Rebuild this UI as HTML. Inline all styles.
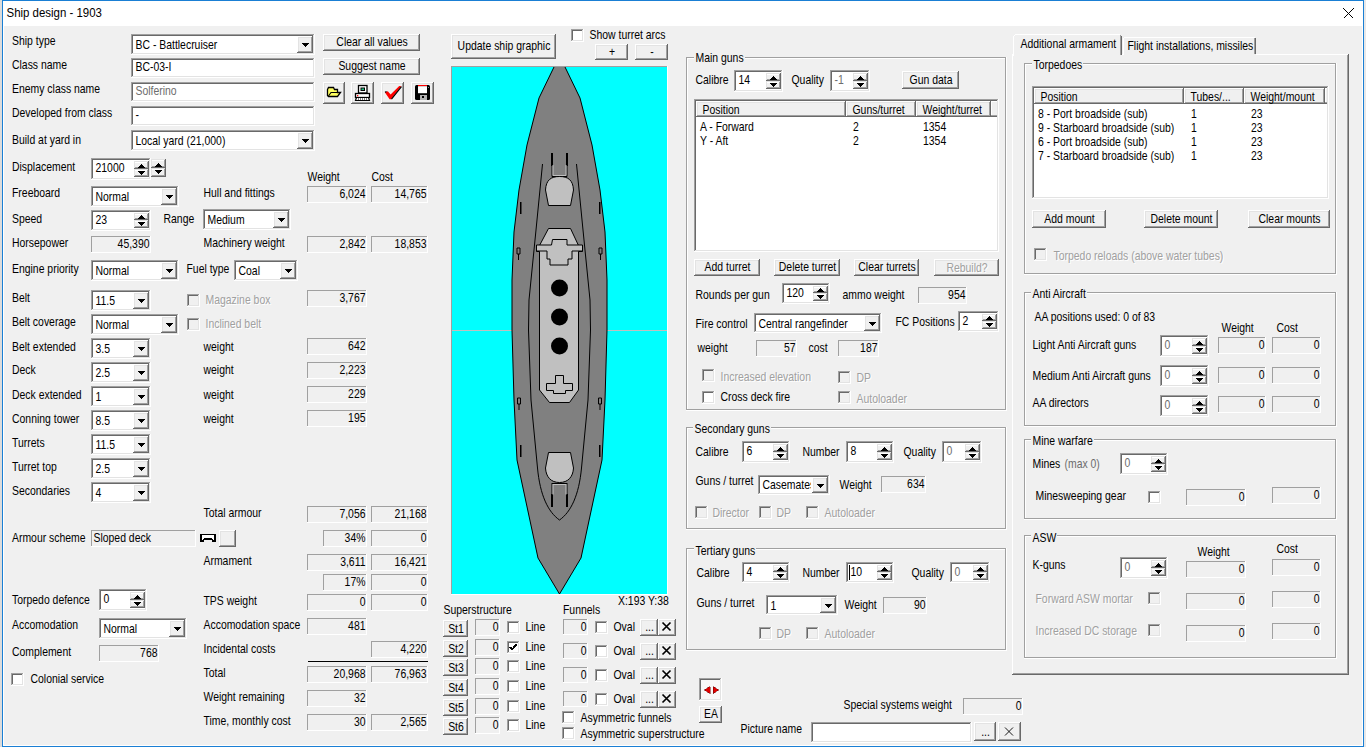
<!DOCTYPE html><html><head><meta charset="utf-8"><style>html,body{margin:0;padding:0;background:#f0f0f0;overflow:hidden}svg{display:block;font-family:"Liberation Sans",sans-serif}</style></head><body><svg width="1366" height="747" viewBox="0 0 1366 747" shape-rendering="crispEdges"><rect x="0" y="0" width="1366" height="747" fill="#dcdcdc"/><rect x="3" y="1" width="1360" height="745" fill="#ffffff"/><rect x="4" y="26" width="1358" height="719" fill="#f0f0f0"/><rect x="2" y="0" width="1362" height="1" fill="#1a7fd4"/><rect x="2" y="746" width="1362" height="1" fill="#1a7fd4"/><rect x="2" y="0" width="1" height="747" fill="#1a7fd4"/><rect x="1363" y="0" width="1" height="747" fill="#1a7fd4"/><rect x="1364" y="0" width="2" height="747" fill="#e8e8e8"/><text transform="translate(6.50,16.80) scale(0.955,1)" fill="#000" font-size="12">Ship design - 1903</text><path d="M1343.5,8.5 L1353.5,18.5 M1353.5,8.5 L1343.5,18.5" stroke="#000" stroke-width="1.1" fill="none"/><text transform="translate(12.00,45.30) scale(0.87,1)" fill="#000" font-size="12">Ship type</text><text transform="translate(12.00,68.80) scale(0.87,1)" fill="#000" font-size="12">Class name</text><text transform="translate(12.00,92.80) scale(0.87,1)" fill="#000" font-size="12">Enemy class name</text><text transform="translate(12.00,116.80) scale(0.87,1)" fill="#000" font-size="12">Developed from class</text><text transform="translate(12.00,143.80) scale(0.87,1)" fill="#000" font-size="12">Build at yard in</text><text transform="translate(12.00,170.80) scale(0.87,1)" fill="#000" font-size="12">Displacement</text><text transform="translate(12.00,196.80) scale(0.87,1)" fill="#000" font-size="12">Freeboard</text><text transform="translate(12.00,222.80) scale(0.87,1)" fill="#000" font-size="12">Speed</text><text transform="translate(12.00,246.80) scale(0.87,1)" fill="#000" font-size="12">Horsepower</text><text transform="translate(12.00,272.80) scale(0.87,1)" fill="#000" font-size="12">Engine priority</text><text transform="translate(12.00,301.80) scale(0.87,1)" fill="#000" font-size="12">Belt</text><text transform="translate(12.00,325.80) scale(0.87,1)" fill="#000" font-size="12">Belt coverage</text><text transform="translate(12.00,350.80) scale(0.87,1)" fill="#000" font-size="12">Belt extended</text><text transform="translate(12.00,373.80) scale(0.87,1)" fill="#000" font-size="12">Deck</text><text transform="translate(12.00,398.80) scale(0.87,1)" fill="#000" font-size="12">Deck extended</text><text transform="translate(12.00,422.80) scale(0.87,1)" fill="#000" font-size="12">Conning tower</text><text transform="translate(12.00,446.80) scale(0.87,1)" fill="#000" font-size="12">Turrets</text><text transform="translate(12.00,470.80) scale(0.87,1)" fill="#000" font-size="12">Turret top</text><text transform="translate(12.00,494.80) scale(0.87,1)" fill="#000" font-size="12">Secondaries</text><text transform="translate(12.00,542.30) scale(0.87,1)" fill="#000" font-size="12">Armour scheme</text><text transform="translate(12.00,603.80) scale(0.87,1)" fill="#000" font-size="12">Torpedo defence</text><text transform="translate(12.00,628.80) scale(0.87,1)" fill="#000" font-size="12">Accomodation</text><text transform="translate(12.00,655.80) scale(0.87,1)" fill="#000" font-size="12">Complement</text><rect x="131" y="34" width="184" height="21" fill="#ffffff"/><rect x="131" y="34" width="184" height="1" fill="#a0a0a0"/><rect x="131" y="34" width="1" height="21" fill="#a0a0a0"/><rect x="131" y="54" width="184" height="1" fill="#ffffff"/><rect x="314" y="34" width="1" height="21" fill="#ffffff"/><rect x="132" y="35" width="182" height="1" fill="#696969"/><rect x="132" y="35" width="1" height="19" fill="#696969"/><rect x="132" y="53" width="182" height="1" fill="#e3e3e3"/><rect x="313" y="35" width="1" height="19" fill="#e3e3e3"/><text transform="translate(135.50,49.30) scale(0.87,1)" fill="#000" font-size="12">BC - Battlecruiser</text><rect x="297" y="36" width="16" height="17" fill="#f0f0f0"/><rect x="297" y="36" width="16" height="1" fill="#ffffff"/><rect x="297" y="36" width="1" height="17" fill="#ffffff"/><rect x="297" y="52" width="16" height="1" fill="#696969"/><rect x="312" y="36" width="1" height="17" fill="#696969"/><rect x="298" y="37" width="14" height="1" fill="#e3e3e3"/><rect x="298" y="37" width="1" height="15" fill="#e3e3e3"/><rect x="298" y="51" width="14" height="1" fill="#a0a0a0"/><rect x="311" y="37" width="1" height="15" fill="#a0a0a0"/><rect x="302" y="43" width="7" height="1" fill="#000"/><rect x="303" y="44" width="5" height="1" fill="#000"/><rect x="304" y="45" width="3" height="1" fill="#000"/><rect x="305" y="46" width="1" height="1" fill="#000"/><rect x="131" y="58" width="184" height="20" fill="#ffffff"/><rect x="131" y="58" width="184" height="1" fill="#a0a0a0"/><rect x="131" y="58" width="1" height="20" fill="#a0a0a0"/><rect x="131" y="77" width="184" height="1" fill="#ffffff"/><rect x="314" y="58" width="1" height="20" fill="#ffffff"/><rect x="132" y="59" width="182" height="1" fill="#696969"/><rect x="132" y="59" width="1" height="18" fill="#696969"/><rect x="132" y="76" width="182" height="1" fill="#e3e3e3"/><rect x="313" y="59" width="1" height="18" fill="#e3e3e3"/><text transform="translate(135.50,71.30) scale(0.87,1)" fill="#000" font-size="12">BC-03-I</text><rect x="131" y="82" width="184" height="20" fill="#ffffff"/><rect x="131" y="82" width="184" height="1" fill="#a0a0a0"/><rect x="131" y="82" width="1" height="20" fill="#a0a0a0"/><rect x="131" y="101" width="184" height="1" fill="#ffffff"/><rect x="314" y="82" width="1" height="20" fill="#ffffff"/><rect x="132" y="83" width="182" height="1" fill="#696969"/><rect x="132" y="83" width="1" height="18" fill="#696969"/><rect x="132" y="100" width="182" height="1" fill="#e3e3e3"/><rect x="313" y="83" width="1" height="18" fill="#e3e3e3"/><text transform="translate(135.50,95.30) scale(0.87,1)" fill="#6d6d6d" font-size="12">Solferino</text><rect x="131" y="106" width="184" height="20" fill="#ffffff"/><rect x="131" y="106" width="184" height="1" fill="#a0a0a0"/><rect x="131" y="106" width="1" height="20" fill="#a0a0a0"/><rect x="131" y="125" width="184" height="1" fill="#ffffff"/><rect x="314" y="106" width="1" height="20" fill="#ffffff"/><rect x="132" y="107" width="182" height="1" fill="#696969"/><rect x="132" y="107" width="1" height="18" fill="#696969"/><rect x="132" y="124" width="182" height="1" fill="#e3e3e3"/><rect x="313" y="107" width="1" height="18" fill="#e3e3e3"/><text transform="translate(135.50,119.30) scale(0.87,1)" fill="#000" font-size="12">-</text><rect x="131" y="130" width="184" height="21" fill="#ffffff"/><rect x="131" y="130" width="184" height="1" fill="#a0a0a0"/><rect x="131" y="130" width="1" height="21" fill="#a0a0a0"/><rect x="131" y="150" width="184" height="1" fill="#ffffff"/><rect x="314" y="130" width="1" height="21" fill="#ffffff"/><rect x="132" y="131" width="182" height="1" fill="#696969"/><rect x="132" y="131" width="1" height="19" fill="#696969"/><rect x="132" y="149" width="182" height="1" fill="#e3e3e3"/><rect x="313" y="131" width="1" height="19" fill="#e3e3e3"/><text transform="translate(135.50,145.30) scale(0.87,1)" fill="#000" font-size="12">Local yard (21,000)</text><rect x="297" y="132" width="16" height="17" fill="#f0f0f0"/><rect x="297" y="132" width="16" height="1" fill="#ffffff"/><rect x="297" y="132" width="1" height="17" fill="#ffffff"/><rect x="297" y="148" width="16" height="1" fill="#696969"/><rect x="312" y="132" width="1" height="17" fill="#696969"/><rect x="298" y="133" width="14" height="1" fill="#e3e3e3"/><rect x="298" y="133" width="1" height="15" fill="#e3e3e3"/><rect x="298" y="147" width="14" height="1" fill="#a0a0a0"/><rect x="311" y="133" width="1" height="15" fill="#a0a0a0"/><rect x="302" y="139" width="7" height="1" fill="#000"/><rect x="303" y="140" width="5" height="1" fill="#000"/><rect x="304" y="141" width="3" height="1" fill="#000"/><rect x="305" y="142" width="1" height="1" fill="#000"/><rect x="323" y="34" width="97" height="17" fill="#f0f0f0"/><rect x="323" y="34" width="97" height="1" fill="#ffffff"/><rect x="323" y="34" width="1" height="17" fill="#ffffff"/><rect x="323" y="50" width="97" height="1" fill="#696969"/><rect x="419" y="34" width="1" height="17" fill="#696969"/><rect x="324" y="35" width="95" height="1" fill="#e3e3e3"/><rect x="324" y="35" width="1" height="15" fill="#e3e3e3"/><rect x="324" y="49" width="95" height="1" fill="#a0a0a0"/><rect x="418" y="35" width="1" height="15" fill="#a0a0a0"/><text transform="translate(372.00,46.30) scale(0.87,1)" fill="#000" font-size="12" text-anchor="middle">Clear all values</text><rect x="323" y="58" width="97" height="17" fill="#f0f0f0"/><rect x="323" y="58" width="97" height="1" fill="#ffffff"/><rect x="323" y="58" width="1" height="17" fill="#ffffff"/><rect x="323" y="74" width="97" height="1" fill="#696969"/><rect x="419" y="58" width="1" height="17" fill="#696969"/><rect x="324" y="59" width="95" height="1" fill="#e3e3e3"/><rect x="324" y="59" width="1" height="15" fill="#e3e3e3"/><rect x="324" y="73" width="95" height="1" fill="#a0a0a0"/><rect x="418" y="59" width="1" height="15" fill="#a0a0a0"/><text transform="translate(372.00,70.30) scale(0.87,1)" fill="#000" font-size="12" text-anchor="middle">Suggest name</text><rect x="323" y="82" width="22" height="22" fill="#f0f0f0"/><rect x="323" y="82" width="22" height="1" fill="#ffffff"/><rect x="323" y="82" width="1" height="22" fill="#ffffff"/><rect x="323" y="103" width="22" height="1" fill="#696969"/><rect x="344" y="82" width="1" height="22" fill="#696969"/><rect x="324" y="83" width="20" height="1" fill="#e3e3e3"/><rect x="324" y="83" width="1" height="20" fill="#e3e3e3"/><rect x="324" y="102" width="20" height="1" fill="#a0a0a0"/><rect x="343" y="83" width="1" height="20" fill="#a0a0a0"/><rect x="351" y="82" width="23" height="22" fill="#f0f0f0"/><rect x="351" y="82" width="23" height="1" fill="#ffffff"/><rect x="351" y="82" width="1" height="22" fill="#ffffff"/><rect x="351" y="103" width="23" height="1" fill="#696969"/><rect x="373" y="82" width="1" height="22" fill="#696969"/><rect x="352" y="83" width="21" height="1" fill="#e3e3e3"/><rect x="352" y="83" width="1" height="20" fill="#e3e3e3"/><rect x="352" y="102" width="21" height="1" fill="#a0a0a0"/><rect x="372" y="83" width="1" height="20" fill="#a0a0a0"/><rect x="381" y="82" width="23" height="22" fill="#f0f0f0"/><rect x="381" y="82" width="23" height="1" fill="#ffffff"/><rect x="381" y="82" width="1" height="22" fill="#ffffff"/><rect x="381" y="103" width="23" height="1" fill="#696969"/><rect x="403" y="82" width="1" height="22" fill="#696969"/><rect x="382" y="83" width="21" height="1" fill="#e3e3e3"/><rect x="382" y="83" width="1" height="20" fill="#e3e3e3"/><rect x="382" y="102" width="21" height="1" fill="#a0a0a0"/><rect x="402" y="83" width="1" height="20" fill="#a0a0a0"/><rect x="411" y="82" width="23" height="22" fill="#f0f0f0"/><rect x="411" y="82" width="23" height="1" fill="#ffffff"/><rect x="411" y="82" width="1" height="22" fill="#ffffff"/><rect x="411" y="103" width="23" height="1" fill="#696969"/><rect x="433" y="82" width="1" height="22" fill="#696969"/><rect x="412" y="83" width="21" height="1" fill="#e3e3e3"/><rect x="412" y="83" width="1" height="20" fill="#e3e3e3"/><rect x="412" y="102" width="21" height="1" fill="#a0a0a0"/><rect x="432" y="83" width="1" height="20" fill="#a0a0a0"/><g shape-rendering="auto"><path d="M327.5,89.5 L328.5,87.5 L333.5,87.5 L334.5,89.5 L337.5,89.5 L337.5,92.5 L340.5,92.5 L337.5,96.5 L328.5,96.5 L327.5,95.5 Z" fill="#ffff60" stroke="#000" stroke-width="1.3"/><path d="M328.5,96 L331,92.5 L340.5,92.5" fill="none" stroke="#000" stroke-width="1.1"/><rect x="358.5" y="85.5" width="8.5" height="7.5" fill="#fff" stroke="#000" stroke-width="1.3"/><rect x="360.5" y="87.5" width="4.5" height="3.5" fill="#000"/><rect x="361.5" y="88.5" width="2.5" height="1.5" fill="#20c080"/><rect x="355.5" y="93.5" width="14" height="4" fill="#fff" stroke="#000" stroke-width="1.3"/><rect x="357" y="95" width="1.3" height="1.3" fill="#f00"/><path d="M356.5,97.5 L368.5,97.5 L369.5,100.5 L355.5,100.5 Z" fill="#fff" stroke="#000" stroke-width="1.2"/><path d="M358,99 h1 M360,99 h1 M362,99 h1 M364,99 h1 M366,99 h1" stroke="#000" stroke-width="1"/><path d="M384.8,92.2 L387.8,91.2 L390.6,94.6 L399.2,86 L401.3,86.2 L391.2,99.2 L389.6,99.2 Z" fill="#ff0000"/><path d="M401.5,86.6 L391.5,99.2 M385,92.2 L386.5,91.5" stroke="#000" stroke-width="1.1" fill="none"/><rect x="415" y="85" width="15" height="15" rx="1.5" fill="#000"/><rect x="418" y="85" width="9" height="1.2" fill="#f00"/><rect x="418" y="86.2" width="9" height="7" fill="#fff"/><rect x="420" y="95" width="7" height="5" fill="#b0b0b0"/><rect x="422" y="96" width="2" height="2" fill="#000"/><rect x="428" y="87" width="1" height="1" fill="#888"/></g><rect x="91" y="158" width="60" height="22" fill="#ffffff"/><rect x="91" y="158" width="60" height="1" fill="#a0a0a0"/><rect x="91" y="158" width="1" height="22" fill="#a0a0a0"/><rect x="91" y="179" width="60" height="1" fill="#ffffff"/><rect x="150" y="158" width="1" height="22" fill="#ffffff"/><rect x="92" y="159" width="58" height="1" fill="#696969"/><rect x="92" y="159" width="1" height="20" fill="#696969"/><rect x="92" y="178" width="58" height="1" fill="#e3e3e3"/><rect x="149" y="159" width="1" height="20" fill="#e3e3e3"/><text transform="translate(95.50,172.30) scale(0.87,1)" fill="#000" font-size="12">21000</text><rect x="134" y="161" width="15" height="8" fill="#f0f0f0"/><rect x="134" y="161" width="15" height="1" fill="#e3e3e3"/><rect x="134" y="161" width="1" height="8" fill="#e3e3e3"/><rect x="134" y="168" width="15" height="1" fill="#696969"/><rect x="148" y="161" width="1" height="8" fill="#696969"/><rect x="135" y="162" width="13" height="1" fill="#ffffff"/><rect x="135" y="167" width="13" height="1" fill="#a0a0a0"/><rect x="147" y="162" width="1" height="6" fill="#a0a0a0"/><rect x="141" y="164" width="1" height="1" fill="#000"/><rect x="140" y="165" width="3" height="1" fill="#000"/><rect x="139" y="166" width="5" height="1" fill="#000"/><rect x="138" y="167" width="7" height="1" fill="#000"/><rect x="134" y="169" width="15" height="8" fill="#f0f0f0"/><rect x="134" y="169" width="15" height="1" fill="#e3e3e3"/><rect x="134" y="169" width="1" height="8" fill="#e3e3e3"/><rect x="134" y="176" width="15" height="1" fill="#696969"/><rect x="148" y="169" width="1" height="8" fill="#696969"/><rect x="135" y="170" width="13" height="1" fill="#ffffff"/><rect x="135" y="175" width="13" height="1" fill="#a0a0a0"/><rect x="147" y="170" width="1" height="6" fill="#a0a0a0"/><rect x="138" y="171" width="7" height="1" fill="#000"/><rect x="139" y="172" width="5" height="1" fill="#000"/><rect x="140" y="173" width="3" height="1" fill="#000"/><rect x="141" y="174" width="1" height="1" fill="#000"/><rect x="151" y="159" width="15" height="9" fill="#f0f0f0"/><rect x="151" y="159" width="15" height="1" fill="#e3e3e3"/><rect x="151" y="159" width="1" height="9" fill="#e3e3e3"/><rect x="151" y="167" width="15" height="1" fill="#696969"/><rect x="165" y="159" width="1" height="9" fill="#696969"/><rect x="152" y="160" width="13" height="1" fill="#ffffff"/><rect x="152" y="166" width="13" height="1" fill="#a0a0a0"/><rect x="164" y="160" width="1" height="7" fill="#a0a0a0"/><rect x="158" y="163" width="1" height="1" fill="#000"/><rect x="157" y="164" width="3" height="1" fill="#000"/><rect x="156" y="165" width="5" height="1" fill="#000"/><rect x="155" y="166" width="7" height="1" fill="#000"/><rect x="151" y="168" width="15" height="9" fill="#f0f0f0"/><rect x="151" y="168" width="15" height="1" fill="#e3e3e3"/><rect x="151" y="168" width="1" height="9" fill="#e3e3e3"/><rect x="151" y="176" width="15" height="1" fill="#696969"/><rect x="165" y="168" width="1" height="9" fill="#696969"/><rect x="152" y="169" width="13" height="1" fill="#ffffff"/><rect x="152" y="175" width="13" height="1" fill="#a0a0a0"/><rect x="164" y="169" width="1" height="7" fill="#a0a0a0"/><rect x="155" y="170" width="7" height="1" fill="#000"/><rect x="156" y="171" width="5" height="1" fill="#000"/><rect x="157" y="172" width="3" height="1" fill="#000"/><rect x="158" y="173" width="1" height="1" fill="#000"/><rect x="91" y="186" width="88" height="21" fill="#ffffff"/><rect x="91" y="186" width="88" height="1" fill="#a0a0a0"/><rect x="91" y="186" width="1" height="21" fill="#a0a0a0"/><rect x="91" y="206" width="88" height="1" fill="#ffffff"/><rect x="178" y="186" width="1" height="21" fill="#ffffff"/><rect x="92" y="187" width="86" height="1" fill="#696969"/><rect x="92" y="187" width="1" height="19" fill="#696969"/><rect x="92" y="205" width="86" height="1" fill="#e3e3e3"/><rect x="177" y="187" width="1" height="19" fill="#e3e3e3"/><text transform="translate(95.50,201.30) scale(0.87,1)" fill="#000" font-size="12">Normal</text><rect x="161" y="188" width="16" height="17" fill="#f0f0f0"/><rect x="161" y="188" width="16" height="1" fill="#ffffff"/><rect x="161" y="188" width="1" height="17" fill="#ffffff"/><rect x="161" y="204" width="16" height="1" fill="#696969"/><rect x="176" y="188" width="1" height="17" fill="#696969"/><rect x="162" y="189" width="14" height="1" fill="#e3e3e3"/><rect x="162" y="189" width="1" height="15" fill="#e3e3e3"/><rect x="162" y="203" width="14" height="1" fill="#a0a0a0"/><rect x="175" y="189" width="1" height="15" fill="#a0a0a0"/><rect x="166" y="195" width="7" height="1" fill="#000"/><rect x="167" y="196" width="5" height="1" fill="#000"/><rect x="168" y="197" width="3" height="1" fill="#000"/><rect x="169" y="198" width="1" height="1" fill="#000"/><rect x="91" y="210" width="60" height="21" fill="#ffffff"/><rect x="91" y="210" width="60" height="1" fill="#a0a0a0"/><rect x="91" y="210" width="1" height="21" fill="#a0a0a0"/><rect x="91" y="230" width="60" height="1" fill="#ffffff"/><rect x="150" y="210" width="1" height="21" fill="#ffffff"/><rect x="92" y="211" width="58" height="1" fill="#696969"/><rect x="92" y="211" width="1" height="19" fill="#696969"/><rect x="92" y="229" width="58" height="1" fill="#e3e3e3"/><rect x="149" y="211" width="1" height="19" fill="#e3e3e3"/><text transform="translate(95.50,223.80) scale(0.87,1)" fill="#000" font-size="12">23</text><rect x="134" y="213" width="15" height="7" fill="#f0f0f0"/><rect x="134" y="213" width="15" height="1" fill="#e3e3e3"/><rect x="134" y="213" width="1" height="7" fill="#e3e3e3"/><rect x="134" y="219" width="15" height="1" fill="#696969"/><rect x="148" y="213" width="1" height="7" fill="#696969"/><rect x="135" y="214" width="13" height="1" fill="#ffffff"/><rect x="135" y="218" width="13" height="1" fill="#a0a0a0"/><rect x="147" y="214" width="1" height="5" fill="#a0a0a0"/><rect x="141" y="215" width="1" height="1" fill="#000"/><rect x="140" y="216" width="3" height="1" fill="#000"/><rect x="139" y="217" width="5" height="1" fill="#000"/><rect x="138" y="218" width="7" height="1" fill="#000"/><rect x="134" y="220" width="15" height="8" fill="#f0f0f0"/><rect x="134" y="220" width="15" height="1" fill="#e3e3e3"/><rect x="134" y="220" width="1" height="8" fill="#e3e3e3"/><rect x="134" y="227" width="15" height="1" fill="#696969"/><rect x="148" y="220" width="1" height="8" fill="#696969"/><rect x="135" y="221" width="13" height="1" fill="#ffffff"/><rect x="135" y="226" width="13" height="1" fill="#a0a0a0"/><rect x="147" y="221" width="1" height="6" fill="#a0a0a0"/><rect x="138" y="222" width="7" height="1" fill="#000"/><rect x="139" y="223" width="5" height="1" fill="#000"/><rect x="140" y="224" width="3" height="1" fill="#000"/><rect x="141" y="225" width="1" height="1" fill="#000"/><text transform="translate(163.50,222.80) scale(0.87,1)" fill="#000" font-size="12">Range</text><rect x="203" y="209" width="88" height="21" fill="#ffffff"/><rect x="203" y="209" width="88" height="1" fill="#a0a0a0"/><rect x="203" y="209" width="1" height="21" fill="#a0a0a0"/><rect x="203" y="229" width="88" height="1" fill="#ffffff"/><rect x="290" y="209" width="1" height="21" fill="#ffffff"/><rect x="204" y="210" width="86" height="1" fill="#696969"/><rect x="204" y="210" width="1" height="19" fill="#696969"/><rect x="204" y="228" width="86" height="1" fill="#e3e3e3"/><rect x="289" y="210" width="1" height="19" fill="#e3e3e3"/><text transform="translate(207.50,224.30) scale(0.87,1)" fill="#000" font-size="12">Medium</text><rect x="273" y="211" width="16" height="17" fill="#f0f0f0"/><rect x="273" y="211" width="16" height="1" fill="#ffffff"/><rect x="273" y="211" width="1" height="17" fill="#ffffff"/><rect x="273" y="227" width="16" height="1" fill="#696969"/><rect x="288" y="211" width="1" height="17" fill="#696969"/><rect x="274" y="212" width="14" height="1" fill="#e3e3e3"/><rect x="274" y="212" width="1" height="15" fill="#e3e3e3"/><rect x="274" y="226" width="14" height="1" fill="#a0a0a0"/><rect x="287" y="212" width="1" height="15" fill="#a0a0a0"/><rect x="278" y="218" width="7" height="1" fill="#000"/><rect x="279" y="219" width="5" height="1" fill="#000"/><rect x="280" y="220" width="3" height="1" fill="#000"/><rect x="281" y="221" width="1" height="1" fill="#000"/><rect x="91" y="236" width="60" height="17" fill="#f0f0f0"/><rect x="91" y="236" width="60" height="1" fill="#a0a0a0"/><rect x="91" y="236" width="1" height="17" fill="#a0a0a0"/><rect x="91" y="252" width="60" height="1" fill="#ffffff"/><rect x="150" y="236" width="1" height="17" fill="#ffffff"/><text transform="translate(149.50,248.30) scale(0.87,1)" fill="#000" font-size="12" text-anchor="end">45,390</text><rect x="91" y="260" width="88" height="21" fill="#ffffff"/><rect x="91" y="260" width="88" height="1" fill="#a0a0a0"/><rect x="91" y="260" width="1" height="21" fill="#a0a0a0"/><rect x="91" y="280" width="88" height="1" fill="#ffffff"/><rect x="178" y="260" width="1" height="21" fill="#ffffff"/><rect x="92" y="261" width="86" height="1" fill="#696969"/><rect x="92" y="261" width="1" height="19" fill="#696969"/><rect x="92" y="279" width="86" height="1" fill="#e3e3e3"/><rect x="177" y="261" width="1" height="19" fill="#e3e3e3"/><text transform="translate(95.50,275.30) scale(0.87,1)" fill="#000" font-size="12">Normal</text><rect x="161" y="262" width="16" height="17" fill="#f0f0f0"/><rect x="161" y="262" width="16" height="1" fill="#ffffff"/><rect x="161" y="262" width="1" height="17" fill="#ffffff"/><rect x="161" y="278" width="16" height="1" fill="#696969"/><rect x="176" y="262" width="1" height="17" fill="#696969"/><rect x="162" y="263" width="14" height="1" fill="#e3e3e3"/><rect x="162" y="263" width="1" height="15" fill="#e3e3e3"/><rect x="162" y="277" width="14" height="1" fill="#a0a0a0"/><rect x="175" y="263" width="1" height="15" fill="#a0a0a0"/><rect x="166" y="269" width="7" height="1" fill="#000"/><rect x="167" y="270" width="5" height="1" fill="#000"/><rect x="168" y="271" width="3" height="1" fill="#000"/><rect x="169" y="272" width="1" height="1" fill="#000"/><text transform="translate(186.50,272.80) scale(0.87,1)" fill="#000" font-size="12">Fuel type</text><rect x="234" y="260" width="64" height="21" fill="#ffffff"/><rect x="234" y="260" width="64" height="1" fill="#a0a0a0"/><rect x="234" y="260" width="1" height="21" fill="#a0a0a0"/><rect x="234" y="280" width="64" height="1" fill="#ffffff"/><rect x="297" y="260" width="1" height="21" fill="#ffffff"/><rect x="235" y="261" width="62" height="1" fill="#696969"/><rect x="235" y="261" width="1" height="19" fill="#696969"/><rect x="235" y="279" width="62" height="1" fill="#e3e3e3"/><rect x="296" y="261" width="1" height="19" fill="#e3e3e3"/><text transform="translate(238.50,275.30) scale(0.87,1)" fill="#000" font-size="12">Coal</text><rect x="280" y="262" width="16" height="17" fill="#f0f0f0"/><rect x="280" y="262" width="16" height="1" fill="#ffffff"/><rect x="280" y="262" width="1" height="17" fill="#ffffff"/><rect x="280" y="278" width="16" height="1" fill="#696969"/><rect x="295" y="262" width="1" height="17" fill="#696969"/><rect x="281" y="263" width="14" height="1" fill="#e3e3e3"/><rect x="281" y="263" width="1" height="15" fill="#e3e3e3"/><rect x="281" y="277" width="14" height="1" fill="#a0a0a0"/><rect x="294" y="263" width="1" height="15" fill="#a0a0a0"/><rect x="285" y="269" width="7" height="1" fill="#000"/><rect x="286" y="270" width="5" height="1" fill="#000"/><rect x="287" y="271" width="3" height="1" fill="#000"/><rect x="288" y="272" width="1" height="1" fill="#000"/><rect x="91" y="290" width="60" height="21" fill="#ffffff"/><rect x="91" y="290" width="60" height="1" fill="#a0a0a0"/><rect x="91" y="290" width="1" height="21" fill="#a0a0a0"/><rect x="91" y="310" width="60" height="1" fill="#ffffff"/><rect x="150" y="290" width="1" height="21" fill="#ffffff"/><rect x="92" y="291" width="58" height="1" fill="#696969"/><rect x="92" y="291" width="1" height="19" fill="#696969"/><rect x="92" y="309" width="58" height="1" fill="#e3e3e3"/><rect x="149" y="291" width="1" height="19" fill="#e3e3e3"/><text transform="translate(95.50,305.30) scale(0.87,1)" fill="#000" font-size="12">11.5</text><rect x="133" y="292" width="16" height="17" fill="#f0f0f0"/><rect x="133" y="292" width="16" height="1" fill="#ffffff"/><rect x="133" y="292" width="1" height="17" fill="#ffffff"/><rect x="133" y="308" width="16" height="1" fill="#696969"/><rect x="148" y="292" width="1" height="17" fill="#696969"/><rect x="134" y="293" width="14" height="1" fill="#e3e3e3"/><rect x="134" y="293" width="1" height="15" fill="#e3e3e3"/><rect x="134" y="307" width="14" height="1" fill="#a0a0a0"/><rect x="147" y="293" width="1" height="15" fill="#a0a0a0"/><rect x="138" y="299" width="7" height="1" fill="#000"/><rect x="139" y="300" width="5" height="1" fill="#000"/><rect x="140" y="301" width="3" height="1" fill="#000"/><rect x="141" y="302" width="1" height="1" fill="#000"/><rect x="187" y="294" width="13" height="13" fill="#f0f0f0"/><rect x="187" y="294" width="13" height="1" fill="#a0a0a0"/><rect x="187" y="294" width="1" height="13" fill="#a0a0a0"/><rect x="187" y="306" width="13" height="1" fill="#ffffff"/><rect x="199" y="294" width="1" height="13" fill="#ffffff"/><rect x="188" y="295" width="11" height="1" fill="#696969"/><rect x="188" y="295" width="1" height="11" fill="#696969"/><rect x="188" y="305" width="11" height="1" fill="#e3e3e3"/><rect x="198" y="295" width="1" height="11" fill="#e3e3e3"/><text transform="translate(206.50,304.80) scale(0.87,1)" fill="#ffffff" font-size="12">Magazine box</text><text transform="translate(205.50,303.80) scale(0.87,1)" fill="#a0a0a0" font-size="12">Magazine box</text><rect x="91" y="314" width="88" height="21" fill="#ffffff"/><rect x="91" y="314" width="88" height="1" fill="#a0a0a0"/><rect x="91" y="314" width="1" height="21" fill="#a0a0a0"/><rect x="91" y="334" width="88" height="1" fill="#ffffff"/><rect x="178" y="314" width="1" height="21" fill="#ffffff"/><rect x="92" y="315" width="86" height="1" fill="#696969"/><rect x="92" y="315" width="1" height="19" fill="#696969"/><rect x="92" y="333" width="86" height="1" fill="#e3e3e3"/><rect x="177" y="315" width="1" height="19" fill="#e3e3e3"/><text transform="translate(95.50,329.30) scale(0.87,1)" fill="#000" font-size="12">Normal</text><rect x="161" y="316" width="16" height="17" fill="#f0f0f0"/><rect x="161" y="316" width="16" height="1" fill="#ffffff"/><rect x="161" y="316" width="1" height="17" fill="#ffffff"/><rect x="161" y="332" width="16" height="1" fill="#696969"/><rect x="176" y="316" width="1" height="17" fill="#696969"/><rect x="162" y="317" width="14" height="1" fill="#e3e3e3"/><rect x="162" y="317" width="1" height="15" fill="#e3e3e3"/><rect x="162" y="331" width="14" height="1" fill="#a0a0a0"/><rect x="175" y="317" width="1" height="15" fill="#a0a0a0"/><rect x="166" y="323" width="7" height="1" fill="#000"/><rect x="167" y="324" width="5" height="1" fill="#000"/><rect x="168" y="325" width="3" height="1" fill="#000"/><rect x="169" y="326" width="1" height="1" fill="#000"/><rect x="187" y="318" width="13" height="13" fill="#f0f0f0"/><rect x="187" y="318" width="13" height="1" fill="#a0a0a0"/><rect x="187" y="318" width="1" height="13" fill="#a0a0a0"/><rect x="187" y="330" width="13" height="1" fill="#ffffff"/><rect x="199" y="318" width="1" height="13" fill="#ffffff"/><rect x="188" y="319" width="11" height="1" fill="#696969"/><rect x="188" y="319" width="1" height="11" fill="#696969"/><rect x="188" y="329" width="11" height="1" fill="#e3e3e3"/><rect x="198" y="319" width="1" height="11" fill="#e3e3e3"/><text transform="translate(206.50,328.80) scale(0.87,1)" fill="#ffffff" font-size="12">Inclined belt</text><text transform="translate(205.50,327.80) scale(0.87,1)" fill="#a0a0a0" font-size="12">Inclined belt</text><rect x="91" y="338" width="60" height="21" fill="#ffffff"/><rect x="91" y="338" width="60" height="1" fill="#a0a0a0"/><rect x="91" y="338" width="1" height="21" fill="#a0a0a0"/><rect x="91" y="358" width="60" height="1" fill="#ffffff"/><rect x="150" y="338" width="1" height="21" fill="#ffffff"/><rect x="92" y="339" width="58" height="1" fill="#696969"/><rect x="92" y="339" width="1" height="19" fill="#696969"/><rect x="92" y="357" width="58" height="1" fill="#e3e3e3"/><rect x="149" y="339" width="1" height="19" fill="#e3e3e3"/><text transform="translate(95.50,353.30) scale(0.87,1)" fill="#000" font-size="12">3.5</text><rect x="133" y="340" width="16" height="17" fill="#f0f0f0"/><rect x="133" y="340" width="16" height="1" fill="#ffffff"/><rect x="133" y="340" width="1" height="17" fill="#ffffff"/><rect x="133" y="356" width="16" height="1" fill="#696969"/><rect x="148" y="340" width="1" height="17" fill="#696969"/><rect x="134" y="341" width="14" height="1" fill="#e3e3e3"/><rect x="134" y="341" width="1" height="15" fill="#e3e3e3"/><rect x="134" y="355" width="14" height="1" fill="#a0a0a0"/><rect x="147" y="341" width="1" height="15" fill="#a0a0a0"/><rect x="138" y="347" width="7" height="1" fill="#000"/><rect x="139" y="348" width="5" height="1" fill="#000"/><rect x="140" y="349" width="3" height="1" fill="#000"/><rect x="141" y="350" width="1" height="1" fill="#000"/><rect x="91" y="362" width="60" height="21" fill="#ffffff"/><rect x="91" y="362" width="60" height="1" fill="#a0a0a0"/><rect x="91" y="362" width="1" height="21" fill="#a0a0a0"/><rect x="91" y="382" width="60" height="1" fill="#ffffff"/><rect x="150" y="362" width="1" height="21" fill="#ffffff"/><rect x="92" y="363" width="58" height="1" fill="#696969"/><rect x="92" y="363" width="1" height="19" fill="#696969"/><rect x="92" y="381" width="58" height="1" fill="#e3e3e3"/><rect x="149" y="363" width="1" height="19" fill="#e3e3e3"/><text transform="translate(95.50,377.30) scale(0.87,1)" fill="#000" font-size="12">2.5</text><rect x="133" y="364" width="16" height="17" fill="#f0f0f0"/><rect x="133" y="364" width="16" height="1" fill="#ffffff"/><rect x="133" y="364" width="1" height="17" fill="#ffffff"/><rect x="133" y="380" width="16" height="1" fill="#696969"/><rect x="148" y="364" width="1" height="17" fill="#696969"/><rect x="134" y="365" width="14" height="1" fill="#e3e3e3"/><rect x="134" y="365" width="1" height="15" fill="#e3e3e3"/><rect x="134" y="379" width="14" height="1" fill="#a0a0a0"/><rect x="147" y="365" width="1" height="15" fill="#a0a0a0"/><rect x="138" y="371" width="7" height="1" fill="#000"/><rect x="139" y="372" width="5" height="1" fill="#000"/><rect x="140" y="373" width="3" height="1" fill="#000"/><rect x="141" y="374" width="1" height="1" fill="#000"/><rect x="91" y="386" width="60" height="21" fill="#ffffff"/><rect x="91" y="386" width="60" height="1" fill="#a0a0a0"/><rect x="91" y="386" width="1" height="21" fill="#a0a0a0"/><rect x="91" y="406" width="60" height="1" fill="#ffffff"/><rect x="150" y="386" width="1" height="21" fill="#ffffff"/><rect x="92" y="387" width="58" height="1" fill="#696969"/><rect x="92" y="387" width="1" height="19" fill="#696969"/><rect x="92" y="405" width="58" height="1" fill="#e3e3e3"/><rect x="149" y="387" width="1" height="19" fill="#e3e3e3"/><text transform="translate(95.50,401.30) scale(0.87,1)" fill="#000" font-size="12">1</text><rect x="133" y="388" width="16" height="17" fill="#f0f0f0"/><rect x="133" y="388" width="16" height="1" fill="#ffffff"/><rect x="133" y="388" width="1" height="17" fill="#ffffff"/><rect x="133" y="404" width="16" height="1" fill="#696969"/><rect x="148" y="388" width="1" height="17" fill="#696969"/><rect x="134" y="389" width="14" height="1" fill="#e3e3e3"/><rect x="134" y="389" width="1" height="15" fill="#e3e3e3"/><rect x="134" y="403" width="14" height="1" fill="#a0a0a0"/><rect x="147" y="389" width="1" height="15" fill="#a0a0a0"/><rect x="138" y="395" width="7" height="1" fill="#000"/><rect x="139" y="396" width="5" height="1" fill="#000"/><rect x="140" y="397" width="3" height="1" fill="#000"/><rect x="141" y="398" width="1" height="1" fill="#000"/><rect x="91" y="410" width="60" height="21" fill="#ffffff"/><rect x="91" y="410" width="60" height="1" fill="#a0a0a0"/><rect x="91" y="410" width="1" height="21" fill="#a0a0a0"/><rect x="91" y="430" width="60" height="1" fill="#ffffff"/><rect x="150" y="410" width="1" height="21" fill="#ffffff"/><rect x="92" y="411" width="58" height="1" fill="#696969"/><rect x="92" y="411" width="1" height="19" fill="#696969"/><rect x="92" y="429" width="58" height="1" fill="#e3e3e3"/><rect x="149" y="411" width="1" height="19" fill="#e3e3e3"/><text transform="translate(95.50,425.30) scale(0.87,1)" fill="#000" font-size="12">8.5</text><rect x="133" y="412" width="16" height="17" fill="#f0f0f0"/><rect x="133" y="412" width="16" height="1" fill="#ffffff"/><rect x="133" y="412" width="1" height="17" fill="#ffffff"/><rect x="133" y="428" width="16" height="1" fill="#696969"/><rect x="148" y="412" width="1" height="17" fill="#696969"/><rect x="134" y="413" width="14" height="1" fill="#e3e3e3"/><rect x="134" y="413" width="1" height="15" fill="#e3e3e3"/><rect x="134" y="427" width="14" height="1" fill="#a0a0a0"/><rect x="147" y="413" width="1" height="15" fill="#a0a0a0"/><rect x="138" y="419" width="7" height="1" fill="#000"/><rect x="139" y="420" width="5" height="1" fill="#000"/><rect x="140" y="421" width="3" height="1" fill="#000"/><rect x="141" y="422" width="1" height="1" fill="#000"/><rect x="91" y="434" width="60" height="21" fill="#ffffff"/><rect x="91" y="434" width="60" height="1" fill="#a0a0a0"/><rect x="91" y="434" width="1" height="21" fill="#a0a0a0"/><rect x="91" y="454" width="60" height="1" fill="#ffffff"/><rect x="150" y="434" width="1" height="21" fill="#ffffff"/><rect x="92" y="435" width="58" height="1" fill="#696969"/><rect x="92" y="435" width="1" height="19" fill="#696969"/><rect x="92" y="453" width="58" height="1" fill="#e3e3e3"/><rect x="149" y="435" width="1" height="19" fill="#e3e3e3"/><text transform="translate(95.50,449.30) scale(0.87,1)" fill="#000" font-size="12">11.5</text><rect x="133" y="436" width="16" height="17" fill="#f0f0f0"/><rect x="133" y="436" width="16" height="1" fill="#ffffff"/><rect x="133" y="436" width="1" height="17" fill="#ffffff"/><rect x="133" y="452" width="16" height="1" fill="#696969"/><rect x="148" y="436" width="1" height="17" fill="#696969"/><rect x="134" y="437" width="14" height="1" fill="#e3e3e3"/><rect x="134" y="437" width="1" height="15" fill="#e3e3e3"/><rect x="134" y="451" width="14" height="1" fill="#a0a0a0"/><rect x="147" y="437" width="1" height="15" fill="#a0a0a0"/><rect x="138" y="443" width="7" height="1" fill="#000"/><rect x="139" y="444" width="5" height="1" fill="#000"/><rect x="140" y="445" width="3" height="1" fill="#000"/><rect x="141" y="446" width="1" height="1" fill="#000"/><rect x="91" y="458" width="60" height="21" fill="#ffffff"/><rect x="91" y="458" width="60" height="1" fill="#a0a0a0"/><rect x="91" y="458" width="1" height="21" fill="#a0a0a0"/><rect x="91" y="478" width="60" height="1" fill="#ffffff"/><rect x="150" y="458" width="1" height="21" fill="#ffffff"/><rect x="92" y="459" width="58" height="1" fill="#696969"/><rect x="92" y="459" width="1" height="19" fill="#696969"/><rect x="92" y="477" width="58" height="1" fill="#e3e3e3"/><rect x="149" y="459" width="1" height="19" fill="#e3e3e3"/><text transform="translate(95.50,473.30) scale(0.87,1)" fill="#000" font-size="12">2.5</text><rect x="133" y="460" width="16" height="17" fill="#f0f0f0"/><rect x="133" y="460" width="16" height="1" fill="#ffffff"/><rect x="133" y="460" width="1" height="17" fill="#ffffff"/><rect x="133" y="476" width="16" height="1" fill="#696969"/><rect x="148" y="460" width="1" height="17" fill="#696969"/><rect x="134" y="461" width="14" height="1" fill="#e3e3e3"/><rect x="134" y="461" width="1" height="15" fill="#e3e3e3"/><rect x="134" y="475" width="14" height="1" fill="#a0a0a0"/><rect x="147" y="461" width="1" height="15" fill="#a0a0a0"/><rect x="138" y="467" width="7" height="1" fill="#000"/><rect x="139" y="468" width="5" height="1" fill="#000"/><rect x="140" y="469" width="3" height="1" fill="#000"/><rect x="141" y="470" width="1" height="1" fill="#000"/><rect x="91" y="482" width="60" height="21" fill="#ffffff"/><rect x="91" y="482" width="60" height="1" fill="#a0a0a0"/><rect x="91" y="482" width="1" height="21" fill="#a0a0a0"/><rect x="91" y="502" width="60" height="1" fill="#ffffff"/><rect x="150" y="482" width="1" height="21" fill="#ffffff"/><rect x="92" y="483" width="58" height="1" fill="#696969"/><rect x="92" y="483" width="1" height="19" fill="#696969"/><rect x="92" y="501" width="58" height="1" fill="#e3e3e3"/><rect x="149" y="483" width="1" height="19" fill="#e3e3e3"/><text transform="translate(95.50,497.30) scale(0.87,1)" fill="#000" font-size="12">4</text><rect x="133" y="484" width="16" height="17" fill="#f0f0f0"/><rect x="133" y="484" width="16" height="1" fill="#ffffff"/><rect x="133" y="484" width="1" height="17" fill="#ffffff"/><rect x="133" y="500" width="16" height="1" fill="#696969"/><rect x="148" y="484" width="1" height="17" fill="#696969"/><rect x="134" y="485" width="14" height="1" fill="#e3e3e3"/><rect x="134" y="485" width="1" height="15" fill="#e3e3e3"/><rect x="134" y="499" width="14" height="1" fill="#a0a0a0"/><rect x="147" y="485" width="1" height="15" fill="#a0a0a0"/><rect x="138" y="491" width="7" height="1" fill="#000"/><rect x="139" y="492" width="5" height="1" fill="#000"/><rect x="140" y="493" width="3" height="1" fill="#000"/><rect x="141" y="494" width="1" height="1" fill="#000"/><rect x="91" y="530" width="105" height="17" fill="#f0f0f0"/><rect x="91" y="530" width="105" height="1" fill="#a0a0a0"/><rect x="91" y="530" width="1" height="17" fill="#a0a0a0"/><rect x="91" y="546" width="105" height="1" fill="#ffffff"/><rect x="195" y="530" width="1" height="17" fill="#ffffff"/><text transform="translate(93.50,542.30) scale(0.87,1)" fill="#000" font-size="12">Sloped deck</text><rect x="99" y="645" width="60" height="17" fill="#f0f0f0"/><rect x="99" y="645" width="60" height="1" fill="#a0a0a0"/><rect x="99" y="645" width="1" height="17" fill="#a0a0a0"/><rect x="99" y="661" width="60" height="1" fill="#ffffff"/><rect x="158" y="645" width="1" height="17" fill="#ffffff"/><text transform="translate(157.50,657.30) scale(0.87,1)" fill="#000" font-size="12" text-anchor="end">768</text><rect x="99" y="589" width="48" height="22" fill="#ffffff"/><rect x="99" y="589" width="48" height="1" fill="#a0a0a0"/><rect x="99" y="589" width="1" height="22" fill="#a0a0a0"/><rect x="99" y="610" width="48" height="1" fill="#ffffff"/><rect x="146" y="589" width="1" height="22" fill="#ffffff"/><rect x="100" y="590" width="46" height="1" fill="#696969"/><rect x="100" y="590" width="1" height="20" fill="#696969"/><rect x="100" y="609" width="46" height="1" fill="#e3e3e3"/><rect x="145" y="590" width="1" height="20" fill="#e3e3e3"/><text transform="translate(103.50,603.30) scale(0.87,1)" fill="#000" font-size="12">0</text><rect x="130" y="592" width="15" height="8" fill="#f0f0f0"/><rect x="130" y="592" width="15" height="1" fill="#e3e3e3"/><rect x="130" y="592" width="1" height="8" fill="#e3e3e3"/><rect x="130" y="599" width="15" height="1" fill="#696969"/><rect x="144" y="592" width="1" height="8" fill="#696969"/><rect x="131" y="593" width="13" height="1" fill="#ffffff"/><rect x="131" y="598" width="13" height="1" fill="#a0a0a0"/><rect x="143" y="593" width="1" height="6" fill="#a0a0a0"/><rect x="137" y="595" width="1" height="1" fill="#000"/><rect x="136" y="596" width="3" height="1" fill="#000"/><rect x="135" y="597" width="5" height="1" fill="#000"/><rect x="134" y="598" width="7" height="1" fill="#000"/><rect x="130" y="600" width="15" height="8" fill="#f0f0f0"/><rect x="130" y="600" width="15" height="1" fill="#e3e3e3"/><rect x="130" y="600" width="1" height="8" fill="#e3e3e3"/><rect x="130" y="607" width="15" height="1" fill="#696969"/><rect x="144" y="600" width="1" height="8" fill="#696969"/><rect x="131" y="601" width="13" height="1" fill="#ffffff"/><rect x="131" y="606" width="13" height="1" fill="#a0a0a0"/><rect x="143" y="601" width="1" height="6" fill="#a0a0a0"/><rect x="134" y="602" width="7" height="1" fill="#000"/><rect x="135" y="603" width="5" height="1" fill="#000"/><rect x="136" y="604" width="3" height="1" fill="#000"/><rect x="137" y="605" width="1" height="1" fill="#000"/><rect x="99" y="618" width="88" height="21" fill="#ffffff"/><rect x="99" y="618" width="88" height="1" fill="#a0a0a0"/><rect x="99" y="618" width="1" height="21" fill="#a0a0a0"/><rect x="99" y="638" width="88" height="1" fill="#ffffff"/><rect x="186" y="618" width="1" height="21" fill="#ffffff"/><rect x="100" y="619" width="86" height="1" fill="#696969"/><rect x="100" y="619" width="1" height="19" fill="#696969"/><rect x="100" y="637" width="86" height="1" fill="#e3e3e3"/><rect x="185" y="619" width="1" height="19" fill="#e3e3e3"/><text transform="translate(103.50,633.30) scale(0.87,1)" fill="#000" font-size="12">Normal</text><rect x="169" y="620" width="16" height="17" fill="#f0f0f0"/><rect x="169" y="620" width="16" height="1" fill="#ffffff"/><rect x="169" y="620" width="1" height="17" fill="#ffffff"/><rect x="169" y="636" width="16" height="1" fill="#696969"/><rect x="184" y="620" width="1" height="17" fill="#696969"/><rect x="170" y="621" width="14" height="1" fill="#e3e3e3"/><rect x="170" y="621" width="1" height="15" fill="#e3e3e3"/><rect x="170" y="635" width="14" height="1" fill="#a0a0a0"/><rect x="183" y="621" width="1" height="15" fill="#a0a0a0"/><rect x="174" y="627" width="7" height="1" fill="#000"/><rect x="175" y="628" width="5" height="1" fill="#000"/><rect x="176" y="629" width="3" height="1" fill="#000"/><rect x="177" y="630" width="1" height="1" fill="#000"/><rect x="11" y="673" width="13" height="13" fill="#ffffff"/><rect x="11" y="673" width="13" height="1" fill="#a0a0a0"/><rect x="11" y="673" width="1" height="13" fill="#a0a0a0"/><rect x="11" y="685" width="13" height="1" fill="#ffffff"/><rect x="23" y="673" width="1" height="13" fill="#ffffff"/><rect x="12" y="674" width="11" height="1" fill="#696969"/><rect x="12" y="674" width="1" height="11" fill="#696969"/><rect x="12" y="684" width="11" height="1" fill="#e3e3e3"/><rect x="22" y="674" width="1" height="11" fill="#e3e3e3"/><text transform="translate(30.50,682.80) scale(0.87,1)" fill="#000" font-size="12">Colonial service</text><text transform="translate(307.50,180.80) scale(0.87,1)" fill="#000" font-size="12">Weight</text><text transform="translate(371.50,180.80) scale(0.87,1)" fill="#000" font-size="12">Cost</text><text transform="translate(203.50,196.80) scale(0.87,1)" fill="#000" font-size="12">Hull and fittings</text><text transform="translate(203.50,246.80) scale(0.87,1)" fill="#000" font-size="12">Machinery weight</text><text transform="translate(203.50,350.80) scale(0.87,1)" fill="#000" font-size="12">weight</text><text transform="translate(203.50,373.80) scale(0.87,1)" fill="#000" font-size="12">weight</text><text transform="translate(203.50,398.80) scale(0.87,1)" fill="#000" font-size="12">weight</text><text transform="translate(203.50,422.80) scale(0.87,1)" fill="#000" font-size="12">weight</text><text transform="translate(203.50,516.80) scale(0.87,1)" fill="#000" font-size="12">Total armour</text><text transform="translate(203.50,564.80) scale(0.87,1)" fill="#000" font-size="12">Armament</text><text transform="translate(203.50,604.80) scale(0.87,1)" fill="#000" font-size="12">TPS weight</text><text transform="translate(203.50,628.80) scale(0.87,1)" fill="#000" font-size="12">Accomodation space</text><text transform="translate(203.50,652.80) scale(0.87,1)" fill="#000" font-size="12">Incidental costs</text><text transform="translate(203.50,676.80) scale(0.87,1)" fill="#000" font-size="12">Total</text><text transform="translate(203.50,700.80) scale(0.87,1)" fill="#000" font-size="12">Weight remaining</text><text transform="translate(203.50,724.80) scale(0.87,1)" fill="#000" font-size="12">Time, monthly cost</text><rect x="307" y="186" width="60" height="17" fill="#f0f0f0"/><rect x="307" y="186" width="60" height="1" fill="#a0a0a0"/><rect x="307" y="186" width="1" height="17" fill="#a0a0a0"/><rect x="307" y="202" width="60" height="1" fill="#ffffff"/><rect x="366" y="186" width="1" height="17" fill="#ffffff"/><text transform="translate(365.50,198.30) scale(0.87,1)" fill="#000" font-size="12" text-anchor="end">6,024</text><rect x="371" y="186" width="57" height="17" fill="#f0f0f0"/><rect x="371" y="186" width="57" height="1" fill="#a0a0a0"/><rect x="371" y="186" width="1" height="17" fill="#a0a0a0"/><rect x="371" y="202" width="57" height="1" fill="#ffffff"/><rect x="427" y="186" width="1" height="17" fill="#ffffff"/><text transform="translate(426.50,198.30) scale(0.87,1)" fill="#000" font-size="12" text-anchor="end">14,765</text><rect x="307" y="236" width="60" height="17" fill="#f0f0f0"/><rect x="307" y="236" width="60" height="1" fill="#a0a0a0"/><rect x="307" y="236" width="1" height="17" fill="#a0a0a0"/><rect x="307" y="252" width="60" height="1" fill="#ffffff"/><rect x="366" y="236" width="1" height="17" fill="#ffffff"/><text transform="translate(365.50,248.30) scale(0.87,1)" fill="#000" font-size="12" text-anchor="end">2,842</text><rect x="371" y="236" width="57" height="17" fill="#f0f0f0"/><rect x="371" y="236" width="57" height="1" fill="#a0a0a0"/><rect x="371" y="236" width="1" height="17" fill="#a0a0a0"/><rect x="371" y="252" width="57" height="1" fill="#ffffff"/><rect x="427" y="236" width="1" height="17" fill="#ffffff"/><text transform="translate(426.50,248.30) scale(0.87,1)" fill="#000" font-size="12" text-anchor="end">18,853</text><rect x="307" y="290" width="60" height="17" fill="#f0f0f0"/><rect x="307" y="290" width="60" height="1" fill="#a0a0a0"/><rect x="307" y="290" width="1" height="17" fill="#a0a0a0"/><rect x="307" y="306" width="60" height="1" fill="#ffffff"/><rect x="366" y="290" width="1" height="17" fill="#ffffff"/><text transform="translate(365.50,302.30) scale(0.87,1)" fill="#000" font-size="12" text-anchor="end">3,767</text><rect x="307" y="338" width="60" height="17" fill="#f0f0f0"/><rect x="307" y="338" width="60" height="1" fill="#a0a0a0"/><rect x="307" y="338" width="1" height="17" fill="#a0a0a0"/><rect x="307" y="354" width="60" height="1" fill="#ffffff"/><rect x="366" y="338" width="1" height="17" fill="#ffffff"/><text transform="translate(365.50,350.30) scale(0.87,1)" fill="#000" font-size="12" text-anchor="end">642</text><rect x="307" y="362" width="60" height="17" fill="#f0f0f0"/><rect x="307" y="362" width="60" height="1" fill="#a0a0a0"/><rect x="307" y="362" width="1" height="17" fill="#a0a0a0"/><rect x="307" y="378" width="60" height="1" fill="#ffffff"/><rect x="366" y="362" width="1" height="17" fill="#ffffff"/><text transform="translate(365.50,374.30) scale(0.87,1)" fill="#000" font-size="12" text-anchor="end">2,223</text><rect x="307" y="386" width="60" height="17" fill="#f0f0f0"/><rect x="307" y="386" width="60" height="1" fill="#a0a0a0"/><rect x="307" y="386" width="1" height="17" fill="#a0a0a0"/><rect x="307" y="402" width="60" height="1" fill="#ffffff"/><rect x="366" y="386" width="1" height="17" fill="#ffffff"/><text transform="translate(365.50,398.30) scale(0.87,1)" fill="#000" font-size="12" text-anchor="end">229</text><rect x="307" y="410" width="60" height="17" fill="#f0f0f0"/><rect x="307" y="410" width="60" height="1" fill="#a0a0a0"/><rect x="307" y="410" width="1" height="17" fill="#a0a0a0"/><rect x="307" y="426" width="60" height="1" fill="#ffffff"/><rect x="366" y="410" width="1" height="17" fill="#ffffff"/><text transform="translate(365.50,422.30) scale(0.87,1)" fill="#000" font-size="12" text-anchor="end">195</text><rect x="307" y="506" width="60" height="17" fill="#f0f0f0"/><rect x="307" y="506" width="60" height="1" fill="#a0a0a0"/><rect x="307" y="506" width="1" height="17" fill="#a0a0a0"/><rect x="307" y="522" width="60" height="1" fill="#ffffff"/><rect x="366" y="506" width="1" height="17" fill="#ffffff"/><text transform="translate(365.50,518.30) scale(0.87,1)" fill="#000" font-size="12" text-anchor="end">7,056</text><rect x="371" y="506" width="57" height="17" fill="#f0f0f0"/><rect x="371" y="506" width="57" height="1" fill="#a0a0a0"/><rect x="371" y="506" width="1" height="17" fill="#a0a0a0"/><rect x="371" y="522" width="57" height="1" fill="#ffffff"/><rect x="427" y="506" width="1" height="17" fill="#ffffff"/><text transform="translate(426.50,518.30) scale(0.87,1)" fill="#000" font-size="12" text-anchor="end">21,168</text><rect x="323" y="530" width="44" height="17" fill="#f0f0f0"/><rect x="323" y="530" width="44" height="1" fill="#a0a0a0"/><rect x="323" y="530" width="1" height="17" fill="#a0a0a0"/><rect x="323" y="546" width="44" height="1" fill="#ffffff"/><rect x="366" y="530" width="1" height="17" fill="#ffffff"/><text transform="translate(365.50,542.30) scale(0.87,1)" fill="#000" font-size="12" text-anchor="end">34%</text><rect x="371" y="530" width="57" height="17" fill="#f0f0f0"/><rect x="371" y="530" width="57" height="1" fill="#a0a0a0"/><rect x="371" y="530" width="1" height="17" fill="#a0a0a0"/><rect x="371" y="546" width="57" height="1" fill="#ffffff"/><rect x="427" y="530" width="1" height="17" fill="#ffffff"/><text transform="translate(426.50,542.30) scale(0.87,1)" fill="#000" font-size="12" text-anchor="end">0</text><rect x="307" y="554" width="60" height="17" fill="#f0f0f0"/><rect x="307" y="554" width="60" height="1" fill="#a0a0a0"/><rect x="307" y="554" width="1" height="17" fill="#a0a0a0"/><rect x="307" y="570" width="60" height="1" fill="#ffffff"/><rect x="366" y="554" width="1" height="17" fill="#ffffff"/><text transform="translate(365.50,566.30) scale(0.87,1)" fill="#000" font-size="12" text-anchor="end">3,611</text><rect x="371" y="554" width="57" height="17" fill="#f0f0f0"/><rect x="371" y="554" width="57" height="1" fill="#a0a0a0"/><rect x="371" y="554" width="1" height="17" fill="#a0a0a0"/><rect x="371" y="570" width="57" height="1" fill="#ffffff"/><rect x="427" y="554" width="1" height="17" fill="#ffffff"/><text transform="translate(426.50,566.30) scale(0.87,1)" fill="#000" font-size="12" text-anchor="end">16,421</text><rect x="323" y="574" width="44" height="17" fill="#f0f0f0"/><rect x="323" y="574" width="44" height="1" fill="#a0a0a0"/><rect x="323" y="574" width="1" height="17" fill="#a0a0a0"/><rect x="323" y="590" width="44" height="1" fill="#ffffff"/><rect x="366" y="574" width="1" height="17" fill="#ffffff"/><text transform="translate(365.50,586.30) scale(0.87,1)" fill="#000" font-size="12" text-anchor="end">17%</text><rect x="371" y="574" width="57" height="17" fill="#f0f0f0"/><rect x="371" y="574" width="57" height="1" fill="#a0a0a0"/><rect x="371" y="574" width="1" height="17" fill="#a0a0a0"/><rect x="371" y="590" width="57" height="1" fill="#ffffff"/><rect x="427" y="574" width="1" height="17" fill="#ffffff"/><text transform="translate(426.50,586.30) scale(0.87,1)" fill="#000" font-size="12" text-anchor="end">0</text><rect x="307" y="594" width="60" height="17" fill="#f0f0f0"/><rect x="307" y="594" width="60" height="1" fill="#a0a0a0"/><rect x="307" y="594" width="1" height="17" fill="#a0a0a0"/><rect x="307" y="610" width="60" height="1" fill="#ffffff"/><rect x="366" y="594" width="1" height="17" fill="#ffffff"/><text transform="translate(365.50,606.30) scale(0.87,1)" fill="#000" font-size="12" text-anchor="end">0</text><rect x="371" y="594" width="57" height="17" fill="#f0f0f0"/><rect x="371" y="594" width="57" height="1" fill="#a0a0a0"/><rect x="371" y="594" width="1" height="17" fill="#a0a0a0"/><rect x="371" y="610" width="57" height="1" fill="#ffffff"/><rect x="427" y="594" width="1" height="17" fill="#ffffff"/><text transform="translate(426.50,606.30) scale(0.87,1)" fill="#000" font-size="12" text-anchor="end">0</text><rect x="307" y="618" width="60" height="17" fill="#f0f0f0"/><rect x="307" y="618" width="60" height="1" fill="#a0a0a0"/><rect x="307" y="618" width="1" height="17" fill="#a0a0a0"/><rect x="307" y="634" width="60" height="1" fill="#ffffff"/><rect x="366" y="618" width="1" height="17" fill="#ffffff"/><text transform="translate(365.50,630.30) scale(0.87,1)" fill="#000" font-size="12" text-anchor="end">481</text><rect x="371" y="641" width="57" height="17" fill="#f0f0f0"/><rect x="371" y="641" width="57" height="1" fill="#a0a0a0"/><rect x="371" y="641" width="1" height="17" fill="#a0a0a0"/><rect x="371" y="657" width="57" height="1" fill="#ffffff"/><rect x="427" y="641" width="1" height="17" fill="#ffffff"/><text transform="translate(426.50,653.30) scale(0.87,1)" fill="#000" font-size="12" text-anchor="end">4,220</text><rect x="308" y="661" width="120" height="1" fill="#000"/><rect x="307" y="666" width="60" height="17" fill="#f0f0f0"/><rect x="307" y="666" width="60" height="1" fill="#a0a0a0"/><rect x="307" y="666" width="1" height="17" fill="#a0a0a0"/><rect x="307" y="682" width="60" height="1" fill="#ffffff"/><rect x="366" y="666" width="1" height="17" fill="#ffffff"/><text transform="translate(365.50,678.30) scale(0.87,1)" fill="#000" font-size="12" text-anchor="end">20,968</text><rect x="371" y="666" width="57" height="17" fill="#f0f0f0"/><rect x="371" y="666" width="57" height="1" fill="#a0a0a0"/><rect x="371" y="666" width="1" height="17" fill="#a0a0a0"/><rect x="371" y="682" width="57" height="1" fill="#ffffff"/><rect x="427" y="666" width="1" height="17" fill="#ffffff"/><text transform="translate(426.50,678.30) scale(0.87,1)" fill="#000" font-size="12" text-anchor="end">76,963</text><rect x="307" y="690" width="60" height="17" fill="#f0f0f0"/><rect x="307" y="690" width="60" height="1" fill="#a0a0a0"/><rect x="307" y="690" width="1" height="17" fill="#a0a0a0"/><rect x="307" y="706" width="60" height="1" fill="#ffffff"/><rect x="366" y="690" width="1" height="17" fill="#ffffff"/><text transform="translate(365.50,702.30) scale(0.87,1)" fill="#000" font-size="12" text-anchor="end">32</text><rect x="307" y="714" width="60" height="17" fill="#f0f0f0"/><rect x="307" y="714" width="60" height="1" fill="#a0a0a0"/><rect x="307" y="714" width="1" height="17" fill="#a0a0a0"/><rect x="307" y="730" width="60" height="1" fill="#ffffff"/><rect x="366" y="714" width="1" height="17" fill="#ffffff"/><text transform="translate(365.50,726.30) scale(0.87,1)" fill="#000" font-size="12" text-anchor="end">30</text><rect x="371" y="714" width="57" height="17" fill="#f0f0f0"/><rect x="371" y="714" width="57" height="1" fill="#a0a0a0"/><rect x="371" y="714" width="1" height="17" fill="#a0a0a0"/><rect x="371" y="730" width="57" height="1" fill="#ffffff"/><rect x="427" y="714" width="1" height="17" fill="#ffffff"/><text transform="translate(426.50,726.30) scale(0.87,1)" fill="#000" font-size="12" text-anchor="end">2,565</text><rect x="202" y="535" width="12" height="5" fill="#fff"/><rect x="200" y="534" width="16" height="1" fill="#000"/><rect x="200" y="534" width="2" height="8" fill="#000"/><rect x="214" y="534" width="2" height="8" fill="#000"/><rect x="204" y="538" width="8" height="2" fill="#000"/><rect x="203" y="539" width="1" height="2" fill="#000"/><rect x="212" y="539" width="1" height="2" fill="#000"/><rect x="200" y="540" width="4" height="2" fill="#000"/><rect x="212" y="540" width="4" height="2" fill="#000"/><rect x="219" y="530" width="17" height="17" fill="#f0f0f0"/><rect x="219" y="530" width="17" height="1" fill="#ffffff"/><rect x="219" y="530" width="1" height="17" fill="#ffffff"/><rect x="219" y="546" width="17" height="1" fill="#696969"/><rect x="235" y="530" width="1" height="17" fill="#696969"/><rect x="220" y="531" width="15" height="1" fill="#e3e3e3"/><rect x="220" y="531" width="1" height="15" fill="#e3e3e3"/><rect x="220" y="545" width="15" height="1" fill="#a0a0a0"/><rect x="234" y="531" width="1" height="15" fill="#a0a0a0"/><rect x="451" y="34" width="105" height="25" fill="#f0f0f0"/><rect x="451" y="34" width="105" height="1" fill="#ffffff"/><rect x="451" y="34" width="1" height="25" fill="#ffffff"/><rect x="451" y="58" width="105" height="1" fill="#696969"/><rect x="555" y="34" width="1" height="25" fill="#696969"/><rect x="452" y="35" width="103" height="1" fill="#e3e3e3"/><rect x="452" y="35" width="1" height="23" fill="#e3e3e3"/><rect x="452" y="57" width="103" height="1" fill="#a0a0a0"/><rect x="554" y="35" width="1" height="23" fill="#a0a0a0"/><text transform="translate(504.00,49.80) scale(0.87,1)" fill="#000" font-size="12" text-anchor="middle">Update ship graphic</text><rect x="571" y="29" width="13" height="13" fill="#ffffff"/><rect x="571" y="29" width="13" height="1" fill="#a0a0a0"/><rect x="571" y="29" width="1" height="13" fill="#a0a0a0"/><rect x="571" y="41" width="13" height="1" fill="#ffffff"/><rect x="583" y="29" width="1" height="13" fill="#ffffff"/><rect x="572" y="30" width="11" height="1" fill="#696969"/><rect x="572" y="30" width="1" height="11" fill="#696969"/><rect x="572" y="40" width="11" height="1" fill="#e3e3e3"/><rect x="582" y="30" width="1" height="11" fill="#e3e3e3"/><text transform="translate(589.50,39.30) scale(0.87,1)" fill="#000" font-size="12">Show turret arcs</text><rect x="595" y="44" width="33" height="16" fill="#f0f0f0"/><rect x="595" y="44" width="33" height="1" fill="#ffffff"/><rect x="595" y="44" width="1" height="16" fill="#ffffff"/><rect x="595" y="59" width="33" height="1" fill="#696969"/><rect x="627" y="44" width="1" height="16" fill="#696969"/><rect x="596" y="45" width="31" height="1" fill="#e3e3e3"/><rect x="596" y="45" width="1" height="14" fill="#e3e3e3"/><rect x="596" y="58" width="31" height="1" fill="#a0a0a0"/><rect x="626" y="45" width="1" height="14" fill="#a0a0a0"/><text transform="translate(612.00,55.80) scale(0.87,1)" fill="#000" font-size="12" text-anchor="middle">+</text><rect x="635" y="44" width="33" height="16" fill="#f0f0f0"/><rect x="635" y="44" width="33" height="1" fill="#ffffff"/><rect x="635" y="44" width="1" height="16" fill="#ffffff"/><rect x="635" y="59" width="33" height="1" fill="#696969"/><rect x="667" y="44" width="1" height="16" fill="#696969"/><rect x="636" y="45" width="31" height="1" fill="#e3e3e3"/><rect x="636" y="45" width="1" height="14" fill="#e3e3e3"/><rect x="636" y="58" width="31" height="1" fill="#a0a0a0"/><rect x="666" y="45" width="1" height="14" fill="#a0a0a0"/><text transform="translate(652.00,55.80) scale(0.87,1)" fill="#000" font-size="12" text-anchor="middle">-</text><rect x="451" y="66" width="217" height="1" fill="#a0a0a0"/><rect x="451" y="66" width="1" height="529" fill="#a0a0a0"/><rect x="451" y="594" width="217" height="1" fill="#ffffff"/><rect x="667" y="66" width="1" height="529" fill="#ffffff"/><rect x="452" y="67" width="215" height="527" fill="#00ffff"/><rect x="452" y="330" width="215" height="1" fill="#c0c0c0"/><clipPath id="pic"><rect x="452" y="67" width="215" height="527"/></clipPath><g shape-rendering="auto" clip-path="url(#pic)"><polygon points="557,60 554,67 539,98 527,145 519,190 514,232 512,280 512,330 514,400 517,460 538,558 559.5,594 581,558 602,460 605,400 607,330 607,280 605,232 600,190 592,145 580,98 565,67 562,60" fill="#808080" stroke="#000" stroke-width="1"/><path d="M542.5,164 L536,230 L529,300 L528.5,330 L531,400 L537.5,468 C540,495 548,512 559.5,520 C571,512 579,495 581.5,468 L588,400 L590.5,330 L590,300 L583,230 L576.5,164" fill="none" stroke="#000" stroke-width="1"/><rect x="551" y="153" width="2" height="13" fill="#000"/><rect x="566" y="153" width="2" height="13" fill="#000"/><path d="M552,165 v11.5 h15 v-11.5" fill="none" stroke="#000" stroke-width="1"/><path d="M553,165 v10.5 h13 v-10.5" fill="none" stroke="#c0c0c0" stroke-width="1"/><path d="M545.5,190 C546,180 551,176.5 559.5,176.5 C568,176.5 573,180 573.5,190 L570.5,205.5 L548.5,205.5 Z" fill="#c0c0c0" stroke="#000" stroke-width="1"/><rect x="551" y="494" width="2" height="13" fill="#000"/><rect x="566" y="494" width="2" height="13" fill="#000"/><path d="M552,483 v11.5 M567,483 v11.5 M552,483.5 h15" fill="none" stroke="#000" stroke-width="1"/><path d="M553,484 v10.5 M566,484 v10.5 M553,484.5 h13" fill="none" stroke="#c0c0c0" stroke-width="1"/><path d="M548.5,452.5 L570.5,452.5 L573.5,468 C573,477 568,482.5 559.5,482.5 C551,482.5 546,477 545.5,468 Z" fill="#c0c0c0" stroke="#000" stroke-width="1"/><path d="M548.5,228.5 L570.5,228.5 L578.5,245.5 L582.5,246 L582.5,251.5 L578.5,251.5 L578.5,390 L569.5,402.5 L549.5,402.5 L539.5,390 L539.5,251.5 L536.5,251.5 L536.5,246 L539.5,245.5 Z" fill="#c0c0c0" stroke="#000" stroke-width="1"/><path d="M552.5,239.5 h14.5 v5.5 h15.5 v6 h-10.5 v8 h-4 v6 h-18 v-6 h-3 v-8 h-10.5 v-6 h15 z" fill="#c0c0c0" stroke="#000" stroke-width="1"/><path d="M555.5,375.5 h8 v8 h9 v7 h-7 v3 h-12 v-3 h-7 v-7 h9 z" fill="none" stroke="#000" stroke-width="1"/><circle cx="559.5" cy="288" r="8.5" fill="#000"/><circle cx="559.5" cy="317" r="8.5" fill="#000"/><circle cx="559.5" cy="346" r="8.5" fill="#000"/><rect x="520" y="202" width="1.5" height="12" fill="#000"/><rect x="599" y="202" width="1.5" height="12" fill="#000"/><path d="M517.0,254 v-6 h3 v6 z M518.5,254 v6" fill="none" stroke="#000" stroke-width="1"/><path d="M599.0,254 v-6 h3 v6 z M600.5,254 v6" fill="none" stroke="#000" stroke-width="1"/><path d="M517.5,404 v-6 h3 v6 z M519,404 v6" fill="none" stroke="#000" stroke-width="1"/><path d="M598.5,404 v-6 h3 v6 z M600,404 v6" fill="none" stroke="#000" stroke-width="1"/><rect x="520" y="445" width="1.5" height="12" fill="#000"/><rect x="599" y="445" width="1.5" height="12" fill="#000"/></g><text transform="translate(618.00,605.30) scale(0.87,1)" fill="#000" font-size="12">X:193 Y:38</text><text transform="translate(443.50,613.80) scale(0.87,1)" fill="#000" font-size="12">Superstructure</text><text transform="translate(563.00,613.80) scale(0.87,1)" fill="#000" font-size="12">Funnels</text><rect x="443" y="620" width="25" height="17" fill="#f0f0f0"/><rect x="443" y="620" width="25" height="1" fill="#ffffff"/><rect x="443" y="620" width="1" height="17" fill="#ffffff"/><rect x="443" y="636" width="25" height="1" fill="#696969"/><rect x="467" y="620" width="1" height="17" fill="#696969"/><rect x="444" y="621" width="23" height="1" fill="#e3e3e3"/><rect x="444" y="621" width="1" height="15" fill="#e3e3e3"/><rect x="444" y="635" width="23" height="1" fill="#a0a0a0"/><rect x="466" y="621" width="1" height="15" fill="#a0a0a0"/><text transform="translate(456.00,632.80) scale(0.87,1)" fill="#000" font-size="12" text-anchor="middle">St1</text><rect x="475" y="619" width="25" height="17" fill="#f0f0f0"/><rect x="475" y="619" width="25" height="1" fill="#a0a0a0"/><rect x="475" y="619" width="1" height="17" fill="#a0a0a0"/><rect x="475" y="635" width="25" height="1" fill="#ffffff"/><rect x="499" y="619" width="1" height="17" fill="#ffffff"/><text transform="translate(498.50,631.30) scale(0.87,1)" fill="#000" font-size="12" text-anchor="end">0</text><rect x="507" y="621" width="13" height="13" fill="#ffffff"/><rect x="507" y="621" width="13" height="1" fill="#a0a0a0"/><rect x="507" y="621" width="1" height="13" fill="#a0a0a0"/><rect x="507" y="633" width="13" height="1" fill="#ffffff"/><rect x="519" y="621" width="1" height="13" fill="#ffffff"/><rect x="508" y="622" width="11" height="1" fill="#696969"/><rect x="508" y="622" width="1" height="11" fill="#696969"/><rect x="508" y="632" width="11" height="1" fill="#e3e3e3"/><rect x="518" y="622" width="1" height="11" fill="#e3e3e3"/><text transform="translate(525.50,631.30) scale(0.87,1)" fill="#000" font-size="12">Line</text><rect x="443" y="640" width="25" height="17" fill="#f0f0f0"/><rect x="443" y="640" width="25" height="1" fill="#ffffff"/><rect x="443" y="640" width="1" height="17" fill="#ffffff"/><rect x="443" y="656" width="25" height="1" fill="#696969"/><rect x="467" y="640" width="1" height="17" fill="#696969"/><rect x="444" y="641" width="23" height="1" fill="#e3e3e3"/><rect x="444" y="641" width="1" height="15" fill="#e3e3e3"/><rect x="444" y="655" width="23" height="1" fill="#a0a0a0"/><rect x="466" y="641" width="1" height="15" fill="#a0a0a0"/><text transform="translate(456.00,652.80) scale(0.87,1)" fill="#000" font-size="12" text-anchor="middle">St2</text><rect x="475" y="639" width="25" height="17" fill="#f0f0f0"/><rect x="475" y="639" width="25" height="1" fill="#a0a0a0"/><rect x="475" y="639" width="1" height="17" fill="#a0a0a0"/><rect x="475" y="655" width="25" height="1" fill="#ffffff"/><rect x="499" y="639" width="1" height="17" fill="#ffffff"/><text transform="translate(498.50,651.30) scale(0.87,1)" fill="#000" font-size="12" text-anchor="end">0</text><rect x="507" y="641" width="13" height="13" fill="#ffffff"/><rect x="507" y="641" width="13" height="1" fill="#a0a0a0"/><rect x="507" y="641" width="1" height="13" fill="#a0a0a0"/><rect x="507" y="653" width="13" height="1" fill="#ffffff"/><rect x="519" y="641" width="1" height="13" fill="#ffffff"/><rect x="508" y="642" width="11" height="1" fill="#696969"/><rect x="508" y="642" width="1" height="11" fill="#696969"/><rect x="508" y="652" width="11" height="1" fill="#e3e3e3"/><rect x="518" y="642" width="1" height="11" fill="#e3e3e3"/><polyline points="510,647 512,649.5 516.5,644.5" fill="none" stroke="#000" stroke-width="1.8"/><text transform="translate(525.50,651.30) scale(0.87,1)" fill="#000" font-size="12">Line</text><rect x="443" y="659" width="25" height="17" fill="#f0f0f0"/><rect x="443" y="659" width="25" height="1" fill="#ffffff"/><rect x="443" y="659" width="1" height="17" fill="#ffffff"/><rect x="443" y="675" width="25" height="1" fill="#696969"/><rect x="467" y="659" width="1" height="17" fill="#696969"/><rect x="444" y="660" width="23" height="1" fill="#e3e3e3"/><rect x="444" y="660" width="1" height="15" fill="#e3e3e3"/><rect x="444" y="674" width="23" height="1" fill="#a0a0a0"/><rect x="466" y="660" width="1" height="15" fill="#a0a0a0"/><text transform="translate(456.00,671.80) scale(0.87,1)" fill="#000" font-size="12" text-anchor="middle">St3</text><rect x="475" y="658" width="25" height="17" fill="#f0f0f0"/><rect x="475" y="658" width="25" height="1" fill="#a0a0a0"/><rect x="475" y="658" width="1" height="17" fill="#a0a0a0"/><rect x="475" y="674" width="25" height="1" fill="#ffffff"/><rect x="499" y="658" width="1" height="17" fill="#ffffff"/><text transform="translate(498.50,670.30) scale(0.87,1)" fill="#000" font-size="12" text-anchor="end">0</text><rect x="507" y="660" width="13" height="13" fill="#ffffff"/><rect x="507" y="660" width="13" height="1" fill="#a0a0a0"/><rect x="507" y="660" width="1" height="13" fill="#a0a0a0"/><rect x="507" y="672" width="13" height="1" fill="#ffffff"/><rect x="519" y="660" width="1" height="13" fill="#ffffff"/><rect x="508" y="661" width="11" height="1" fill="#696969"/><rect x="508" y="661" width="1" height="11" fill="#696969"/><rect x="508" y="671" width="11" height="1" fill="#e3e3e3"/><rect x="518" y="661" width="1" height="11" fill="#e3e3e3"/><text transform="translate(525.50,670.30) scale(0.87,1)" fill="#000" font-size="12">Line</text><rect x="443" y="679" width="25" height="17" fill="#f0f0f0"/><rect x="443" y="679" width="25" height="1" fill="#ffffff"/><rect x="443" y="679" width="1" height="17" fill="#ffffff"/><rect x="443" y="695" width="25" height="1" fill="#696969"/><rect x="467" y="679" width="1" height="17" fill="#696969"/><rect x="444" y="680" width="23" height="1" fill="#e3e3e3"/><rect x="444" y="680" width="1" height="15" fill="#e3e3e3"/><rect x="444" y="694" width="23" height="1" fill="#a0a0a0"/><rect x="466" y="680" width="1" height="15" fill="#a0a0a0"/><text transform="translate(456.00,691.80) scale(0.87,1)" fill="#000" font-size="12" text-anchor="middle">St4</text><rect x="475" y="678" width="25" height="17" fill="#f0f0f0"/><rect x="475" y="678" width="25" height="1" fill="#a0a0a0"/><rect x="475" y="678" width="1" height="17" fill="#a0a0a0"/><rect x="475" y="694" width="25" height="1" fill="#ffffff"/><rect x="499" y="678" width="1" height="17" fill="#ffffff"/><text transform="translate(498.50,690.30) scale(0.87,1)" fill="#000" font-size="12" text-anchor="end">0</text><rect x="507" y="680" width="13" height="13" fill="#ffffff"/><rect x="507" y="680" width="13" height="1" fill="#a0a0a0"/><rect x="507" y="680" width="1" height="13" fill="#a0a0a0"/><rect x="507" y="692" width="13" height="1" fill="#ffffff"/><rect x="519" y="680" width="1" height="13" fill="#ffffff"/><rect x="508" y="681" width="11" height="1" fill="#696969"/><rect x="508" y="681" width="1" height="11" fill="#696969"/><rect x="508" y="691" width="11" height="1" fill="#e3e3e3"/><rect x="518" y="681" width="1" height="11" fill="#e3e3e3"/><text transform="translate(525.50,690.30) scale(0.87,1)" fill="#000" font-size="12">Line</text><rect x="443" y="699" width="25" height="17" fill="#f0f0f0"/><rect x="443" y="699" width="25" height="1" fill="#ffffff"/><rect x="443" y="699" width="1" height="17" fill="#ffffff"/><rect x="443" y="715" width="25" height="1" fill="#696969"/><rect x="467" y="699" width="1" height="17" fill="#696969"/><rect x="444" y="700" width="23" height="1" fill="#e3e3e3"/><rect x="444" y="700" width="1" height="15" fill="#e3e3e3"/><rect x="444" y="714" width="23" height="1" fill="#a0a0a0"/><rect x="466" y="700" width="1" height="15" fill="#a0a0a0"/><text transform="translate(456.00,711.80) scale(0.87,1)" fill="#000" font-size="12" text-anchor="middle">St5</text><rect x="475" y="698" width="25" height="17" fill="#f0f0f0"/><rect x="475" y="698" width="25" height="1" fill="#a0a0a0"/><rect x="475" y="698" width="1" height="17" fill="#a0a0a0"/><rect x="475" y="714" width="25" height="1" fill="#ffffff"/><rect x="499" y="698" width="1" height="17" fill="#ffffff"/><text transform="translate(498.50,710.30) scale(0.87,1)" fill="#000" font-size="12" text-anchor="end">0</text><rect x="507" y="700" width="13" height="13" fill="#ffffff"/><rect x="507" y="700" width="13" height="1" fill="#a0a0a0"/><rect x="507" y="700" width="1" height="13" fill="#a0a0a0"/><rect x="507" y="712" width="13" height="1" fill="#ffffff"/><rect x="519" y="700" width="1" height="13" fill="#ffffff"/><rect x="508" y="701" width="11" height="1" fill="#696969"/><rect x="508" y="701" width="1" height="11" fill="#696969"/><rect x="508" y="711" width="11" height="1" fill="#e3e3e3"/><rect x="518" y="701" width="1" height="11" fill="#e3e3e3"/><text transform="translate(525.50,710.30) scale(0.87,1)" fill="#000" font-size="12">Line</text><rect x="443" y="718" width="25" height="17" fill="#f0f0f0"/><rect x="443" y="718" width="25" height="1" fill="#ffffff"/><rect x="443" y="718" width="1" height="17" fill="#ffffff"/><rect x="443" y="734" width="25" height="1" fill="#696969"/><rect x="467" y="718" width="1" height="17" fill="#696969"/><rect x="444" y="719" width="23" height="1" fill="#e3e3e3"/><rect x="444" y="719" width="1" height="15" fill="#e3e3e3"/><rect x="444" y="733" width="23" height="1" fill="#a0a0a0"/><rect x="466" y="719" width="1" height="15" fill="#a0a0a0"/><text transform="translate(456.00,730.80) scale(0.87,1)" fill="#000" font-size="12" text-anchor="middle">St6</text><rect x="475" y="717" width="25" height="17" fill="#f0f0f0"/><rect x="475" y="717" width="25" height="1" fill="#a0a0a0"/><rect x="475" y="717" width="1" height="17" fill="#a0a0a0"/><rect x="475" y="733" width="25" height="1" fill="#ffffff"/><rect x="499" y="717" width="1" height="17" fill="#ffffff"/><text transform="translate(498.50,729.30) scale(0.87,1)" fill="#000" font-size="12" text-anchor="end">0</text><rect x="507" y="719" width="13" height="13" fill="#ffffff"/><rect x="507" y="719" width="13" height="1" fill="#a0a0a0"/><rect x="507" y="719" width="1" height="13" fill="#a0a0a0"/><rect x="507" y="731" width="13" height="1" fill="#ffffff"/><rect x="519" y="719" width="1" height="13" fill="#ffffff"/><rect x="508" y="720" width="11" height="1" fill="#696969"/><rect x="508" y="720" width="1" height="11" fill="#696969"/><rect x="508" y="730" width="11" height="1" fill="#e3e3e3"/><rect x="518" y="720" width="1" height="11" fill="#e3e3e3"/><text transform="translate(525.50,729.30) scale(0.87,1)" fill="#000" font-size="12">Line</text><rect x="563" y="619" width="25" height="16" fill="#f0f0f0"/><rect x="563" y="619" width="25" height="1" fill="#a0a0a0"/><rect x="563" y="619" width="1" height="16" fill="#a0a0a0"/><rect x="563" y="634" width="25" height="1" fill="#ffffff"/><rect x="587" y="619" width="1" height="16" fill="#ffffff"/><text transform="translate(586.50,630.80) scale(0.87,1)" fill="#000" font-size="12" text-anchor="end">0</text><rect x="595" y="621" width="13" height="13" fill="#ffffff"/><rect x="595" y="621" width="13" height="1" fill="#a0a0a0"/><rect x="595" y="621" width="1" height="13" fill="#a0a0a0"/><rect x="595" y="633" width="13" height="1" fill="#ffffff"/><rect x="607" y="621" width="1" height="13" fill="#ffffff"/><rect x="596" y="622" width="11" height="1" fill="#696969"/><rect x="596" y="622" width="1" height="11" fill="#696969"/><rect x="596" y="632" width="11" height="1" fill="#e3e3e3"/><rect x="606" y="622" width="1" height="11" fill="#e3e3e3"/><text transform="translate(613.50,630.80) scale(0.87,1)" fill="#000" font-size="12">Oval</text><rect x="640" y="619" width="18" height="17" fill="#f0f0f0"/><rect x="640" y="619" width="18" height="1" fill="#ffffff"/><rect x="640" y="619" width="1" height="17" fill="#ffffff"/><rect x="640" y="635" width="18" height="1" fill="#696969"/><rect x="657" y="619" width="1" height="17" fill="#696969"/><rect x="641" y="620" width="16" height="1" fill="#e3e3e3"/><rect x="641" y="620" width="1" height="15" fill="#e3e3e3"/><rect x="641" y="634" width="16" height="1" fill="#a0a0a0"/><rect x="656" y="620" width="1" height="15" fill="#a0a0a0"/><text transform="translate(649.50,630.80) scale(0.87,1)" fill="#000" font-size="12" text-anchor="middle">...</text><rect x="658" y="619" width="18" height="17" fill="#f0f0f0"/><rect x="658" y="619" width="18" height="1" fill="#ffffff"/><rect x="658" y="619" width="1" height="17" fill="#ffffff"/><rect x="658" y="635" width="18" height="1" fill="#696969"/><rect x="675" y="619" width="1" height="17" fill="#696969"/><rect x="659" y="620" width="16" height="1" fill="#e3e3e3"/><rect x="659" y="620" width="1" height="15" fill="#e3e3e3"/><rect x="659" y="634" width="16" height="1" fill="#a0a0a0"/><rect x="674" y="620" width="1" height="15" fill="#a0a0a0"/><path d="M662.5,622.5 l8,8 M670.5,622.5 l-8,8" stroke="#000" stroke-width="1.7" shape-rendering="auto"/><rect x="563" y="643" width="25" height="16" fill="#f0f0f0"/><rect x="563" y="643" width="25" height="1" fill="#a0a0a0"/><rect x="563" y="643" width="1" height="16" fill="#a0a0a0"/><rect x="563" y="658" width="25" height="1" fill="#ffffff"/><rect x="587" y="643" width="1" height="16" fill="#ffffff"/><text transform="translate(586.50,654.80) scale(0.87,1)" fill="#000" font-size="12" text-anchor="end">0</text><rect x="595" y="645" width="13" height="13" fill="#ffffff"/><rect x="595" y="645" width="13" height="1" fill="#a0a0a0"/><rect x="595" y="645" width="1" height="13" fill="#a0a0a0"/><rect x="595" y="657" width="13" height="1" fill="#ffffff"/><rect x="607" y="645" width="1" height="13" fill="#ffffff"/><rect x="596" y="646" width="11" height="1" fill="#696969"/><rect x="596" y="646" width="1" height="11" fill="#696969"/><rect x="596" y="656" width="11" height="1" fill="#e3e3e3"/><rect x="606" y="646" width="1" height="11" fill="#e3e3e3"/><text transform="translate(613.50,654.80) scale(0.87,1)" fill="#000" font-size="12">Oval</text><rect x="640" y="643" width="18" height="17" fill="#f0f0f0"/><rect x="640" y="643" width="18" height="1" fill="#ffffff"/><rect x="640" y="643" width="1" height="17" fill="#ffffff"/><rect x="640" y="659" width="18" height="1" fill="#696969"/><rect x="657" y="643" width="1" height="17" fill="#696969"/><rect x="641" y="644" width="16" height="1" fill="#e3e3e3"/><rect x="641" y="644" width="1" height="15" fill="#e3e3e3"/><rect x="641" y="658" width="16" height="1" fill="#a0a0a0"/><rect x="656" y="644" width="1" height="15" fill="#a0a0a0"/><text transform="translate(649.50,654.80) scale(0.87,1)" fill="#000" font-size="12" text-anchor="middle">...</text><rect x="658" y="643" width="18" height="17" fill="#f0f0f0"/><rect x="658" y="643" width="18" height="1" fill="#ffffff"/><rect x="658" y="643" width="1" height="17" fill="#ffffff"/><rect x="658" y="659" width="18" height="1" fill="#696969"/><rect x="675" y="643" width="1" height="17" fill="#696969"/><rect x="659" y="644" width="16" height="1" fill="#e3e3e3"/><rect x="659" y="644" width="1" height="15" fill="#e3e3e3"/><rect x="659" y="658" width="16" height="1" fill="#a0a0a0"/><rect x="674" y="644" width="1" height="15" fill="#a0a0a0"/><path d="M662.5,646.5 l8,8 M670.5,646.5 l-8,8" stroke="#000" stroke-width="1.7" shape-rendering="auto"/><rect x="563" y="667" width="25" height="16" fill="#f0f0f0"/><rect x="563" y="667" width="25" height="1" fill="#a0a0a0"/><rect x="563" y="667" width="1" height="16" fill="#a0a0a0"/><rect x="563" y="682" width="25" height="1" fill="#ffffff"/><rect x="587" y="667" width="1" height="16" fill="#ffffff"/><text transform="translate(586.50,678.80) scale(0.87,1)" fill="#000" font-size="12" text-anchor="end">0</text><rect x="595" y="669" width="13" height="13" fill="#ffffff"/><rect x="595" y="669" width="13" height="1" fill="#a0a0a0"/><rect x="595" y="669" width="1" height="13" fill="#a0a0a0"/><rect x="595" y="681" width="13" height="1" fill="#ffffff"/><rect x="607" y="669" width="1" height="13" fill="#ffffff"/><rect x="596" y="670" width="11" height="1" fill="#696969"/><rect x="596" y="670" width="1" height="11" fill="#696969"/><rect x="596" y="680" width="11" height="1" fill="#e3e3e3"/><rect x="606" y="670" width="1" height="11" fill="#e3e3e3"/><text transform="translate(613.50,678.80) scale(0.87,1)" fill="#000" font-size="12">Oval</text><rect x="640" y="667" width="18" height="17" fill="#f0f0f0"/><rect x="640" y="667" width="18" height="1" fill="#ffffff"/><rect x="640" y="667" width="1" height="17" fill="#ffffff"/><rect x="640" y="683" width="18" height="1" fill="#696969"/><rect x="657" y="667" width="1" height="17" fill="#696969"/><rect x="641" y="668" width="16" height="1" fill="#e3e3e3"/><rect x="641" y="668" width="1" height="15" fill="#e3e3e3"/><rect x="641" y="682" width="16" height="1" fill="#a0a0a0"/><rect x="656" y="668" width="1" height="15" fill="#a0a0a0"/><text transform="translate(649.50,678.80) scale(0.87,1)" fill="#000" font-size="12" text-anchor="middle">...</text><rect x="658" y="667" width="18" height="17" fill="#f0f0f0"/><rect x="658" y="667" width="18" height="1" fill="#ffffff"/><rect x="658" y="667" width="1" height="17" fill="#ffffff"/><rect x="658" y="683" width="18" height="1" fill="#696969"/><rect x="675" y="667" width="1" height="17" fill="#696969"/><rect x="659" y="668" width="16" height="1" fill="#e3e3e3"/><rect x="659" y="668" width="1" height="15" fill="#e3e3e3"/><rect x="659" y="682" width="16" height="1" fill="#a0a0a0"/><rect x="674" y="668" width="1" height="15" fill="#a0a0a0"/><path d="M662.5,670.5 l8,8 M670.5,670.5 l-8,8" stroke="#000" stroke-width="1.7" shape-rendering="auto"/><rect x="563" y="691" width="25" height="16" fill="#f0f0f0"/><rect x="563" y="691" width="25" height="1" fill="#a0a0a0"/><rect x="563" y="691" width="1" height="16" fill="#a0a0a0"/><rect x="563" y="706" width="25" height="1" fill="#ffffff"/><rect x="587" y="691" width="1" height="16" fill="#ffffff"/><text transform="translate(586.50,702.80) scale(0.87,1)" fill="#000" font-size="12" text-anchor="end">0</text><rect x="595" y="693" width="13" height="13" fill="#ffffff"/><rect x="595" y="693" width="13" height="1" fill="#a0a0a0"/><rect x="595" y="693" width="1" height="13" fill="#a0a0a0"/><rect x="595" y="705" width="13" height="1" fill="#ffffff"/><rect x="607" y="693" width="1" height="13" fill="#ffffff"/><rect x="596" y="694" width="11" height="1" fill="#696969"/><rect x="596" y="694" width="1" height="11" fill="#696969"/><rect x="596" y="704" width="11" height="1" fill="#e3e3e3"/><rect x="606" y="694" width="1" height="11" fill="#e3e3e3"/><text transform="translate(613.50,702.80) scale(0.87,1)" fill="#000" font-size="12">Oval</text><rect x="640" y="691" width="18" height="17" fill="#f0f0f0"/><rect x="640" y="691" width="18" height="1" fill="#ffffff"/><rect x="640" y="691" width="1" height="17" fill="#ffffff"/><rect x="640" y="707" width="18" height="1" fill="#696969"/><rect x="657" y="691" width="1" height="17" fill="#696969"/><rect x="641" y="692" width="16" height="1" fill="#e3e3e3"/><rect x="641" y="692" width="1" height="15" fill="#e3e3e3"/><rect x="641" y="706" width="16" height="1" fill="#a0a0a0"/><rect x="656" y="692" width="1" height="15" fill="#a0a0a0"/><text transform="translate(649.50,702.80) scale(0.87,1)" fill="#000" font-size="12" text-anchor="middle">...</text><rect x="658" y="691" width="18" height="17" fill="#f0f0f0"/><rect x="658" y="691" width="18" height="1" fill="#ffffff"/><rect x="658" y="691" width="1" height="17" fill="#ffffff"/><rect x="658" y="707" width="18" height="1" fill="#696969"/><rect x="675" y="691" width="1" height="17" fill="#696969"/><rect x="659" y="692" width="16" height="1" fill="#e3e3e3"/><rect x="659" y="692" width="1" height="15" fill="#e3e3e3"/><rect x="659" y="706" width="16" height="1" fill="#a0a0a0"/><rect x="674" y="692" width="1" height="15" fill="#a0a0a0"/><path d="M662.5,694.5 l8,8 M670.5,694.5 l-8,8" stroke="#000" stroke-width="1.7" shape-rendering="auto"/><rect x="562" y="711" width="13" height="13" fill="#ffffff"/><rect x="562" y="711" width="13" height="1" fill="#a0a0a0"/><rect x="562" y="711" width="1" height="13" fill="#a0a0a0"/><rect x="562" y="723" width="13" height="1" fill="#ffffff"/><rect x="574" y="711" width="1" height="13" fill="#ffffff"/><rect x="563" y="712" width="11" height="1" fill="#696969"/><rect x="563" y="712" width="1" height="11" fill="#696969"/><rect x="563" y="722" width="11" height="1" fill="#e3e3e3"/><rect x="573" y="712" width="1" height="11" fill="#e3e3e3"/><text transform="translate(580.50,721.80) scale(0.87,1)" fill="#000" font-size="12">Asymmetric funnels</text><rect x="562" y="727" width="13" height="13" fill="#ffffff"/><rect x="562" y="727" width="13" height="1" fill="#a0a0a0"/><rect x="562" y="727" width="1" height="13" fill="#a0a0a0"/><rect x="562" y="739" width="13" height="1" fill="#ffffff"/><rect x="574" y="727" width="1" height="13" fill="#ffffff"/><rect x="563" y="728" width="11" height="1" fill="#696969"/><rect x="563" y="728" width="1" height="11" fill="#696969"/><rect x="563" y="738" width="11" height="1" fill="#e3e3e3"/><rect x="573" y="728" width="1" height="11" fill="#e3e3e3"/><text transform="translate(580.50,737.80) scale(0.87,1)" fill="#000" font-size="12">Asymmetric superstructure</text><rect x="686" y="57" width="320" height="1" fill="#a0a0a0"/><rect x="686" y="57" width="1" height="353" fill="#a0a0a0"/><rect x="686" y="409" width="320" height="1" fill="#a0a0a0"/><rect x="1005" y="57" width="1" height="353" fill="#a0a0a0"/><rect x="687" y="58" width="318" height="1" fill="#ffffff"/><rect x="687" y="58" width="1" height="351" fill="#ffffff"/><rect x="686" y="410" width="321" height="1" fill="#ffffff"/><rect x="1006" y="57" width="1" height="354" fill="#ffffff"/><rect x="694" y="51" width="51" height="14" fill="#f0f0f0"/><text transform="translate(695.50,61.80) scale(0.87,1)" fill="#000" font-size="12">Main guns</text><text transform="translate(695.50,84.30) scale(0.87,1)" fill="#000" font-size="12">Calibre</text><rect x="734" y="70" width="49" height="22" fill="#ffffff"/><rect x="734" y="70" width="49" height="1" fill="#a0a0a0"/><rect x="734" y="70" width="1" height="22" fill="#a0a0a0"/><rect x="734" y="91" width="49" height="1" fill="#ffffff"/><rect x="782" y="70" width="1" height="22" fill="#ffffff"/><rect x="735" y="71" width="47" height="1" fill="#696969"/><rect x="735" y="71" width="1" height="20" fill="#696969"/><rect x="735" y="90" width="47" height="1" fill="#e3e3e3"/><rect x="781" y="71" width="1" height="20" fill="#e3e3e3"/><text transform="translate(738.50,84.30) scale(0.87,1)" fill="#000" font-size="12">14</text><rect x="766" y="73" width="15" height="8" fill="#f0f0f0"/><rect x="766" y="73" width="15" height="1" fill="#e3e3e3"/><rect x="766" y="73" width="1" height="8" fill="#e3e3e3"/><rect x="766" y="80" width="15" height="1" fill="#696969"/><rect x="780" y="73" width="1" height="8" fill="#696969"/><rect x="767" y="74" width="13" height="1" fill="#ffffff"/><rect x="767" y="79" width="13" height="1" fill="#a0a0a0"/><rect x="779" y="74" width="1" height="6" fill="#a0a0a0"/><rect x="773" y="76" width="1" height="1" fill="#000"/><rect x="772" y="77" width="3" height="1" fill="#000"/><rect x="771" y="78" width="5" height="1" fill="#000"/><rect x="770" y="79" width="7" height="1" fill="#000"/><rect x="766" y="81" width="15" height="8" fill="#f0f0f0"/><rect x="766" y="81" width="15" height="1" fill="#e3e3e3"/><rect x="766" y="81" width="1" height="8" fill="#e3e3e3"/><rect x="766" y="88" width="15" height="1" fill="#696969"/><rect x="780" y="81" width="1" height="8" fill="#696969"/><rect x="767" y="82" width="13" height="1" fill="#ffffff"/><rect x="767" y="87" width="13" height="1" fill="#a0a0a0"/><rect x="779" y="82" width="1" height="6" fill="#a0a0a0"/><rect x="770" y="83" width="7" height="1" fill="#000"/><rect x="771" y="84" width="5" height="1" fill="#000"/><rect x="772" y="85" width="3" height="1" fill="#000"/><rect x="773" y="86" width="1" height="1" fill="#000"/><text transform="translate(791.50,84.30) scale(0.87,1)" fill="#000" font-size="12">Quality</text><rect x="830" y="70" width="40" height="22" fill="#ffffff"/><rect x="830" y="70" width="40" height="1" fill="#a0a0a0"/><rect x="830" y="70" width="1" height="22" fill="#a0a0a0"/><rect x="830" y="91" width="40" height="1" fill="#ffffff"/><rect x="869" y="70" width="1" height="22" fill="#ffffff"/><rect x="831" y="71" width="38" height="1" fill="#696969"/><rect x="831" y="71" width="1" height="20" fill="#696969"/><rect x="831" y="90" width="38" height="1" fill="#e3e3e3"/><rect x="868" y="71" width="1" height="20" fill="#e3e3e3"/><text transform="translate(834.50,84.30) scale(0.87,1)" fill="#6d6d6d" font-size="12">-1</text><rect x="853" y="73" width="15" height="8" fill="#f0f0f0"/><rect x="853" y="73" width="15" height="1" fill="#e3e3e3"/><rect x="853" y="73" width="1" height="8" fill="#e3e3e3"/><rect x="853" y="80" width="15" height="1" fill="#696969"/><rect x="867" y="73" width="1" height="8" fill="#696969"/><rect x="854" y="74" width="13" height="1" fill="#ffffff"/><rect x="854" y="79" width="13" height="1" fill="#a0a0a0"/><rect x="866" y="74" width="1" height="6" fill="#a0a0a0"/><rect x="860" y="76" width="1" height="1" fill="#000"/><rect x="859" y="77" width="3" height="1" fill="#000"/><rect x="858" y="78" width="5" height="1" fill="#000"/><rect x="857" y="79" width="7" height="1" fill="#000"/><rect x="853" y="81" width="15" height="8" fill="#f0f0f0"/><rect x="853" y="81" width="15" height="1" fill="#e3e3e3"/><rect x="853" y="81" width="1" height="8" fill="#e3e3e3"/><rect x="853" y="88" width="15" height="1" fill="#696969"/><rect x="867" y="81" width="1" height="8" fill="#696969"/><rect x="854" y="82" width="13" height="1" fill="#ffffff"/><rect x="854" y="87" width="13" height="1" fill="#a0a0a0"/><rect x="866" y="82" width="1" height="6" fill="#a0a0a0"/><rect x="857" y="83" width="7" height="1" fill="#000"/><rect x="858" y="84" width="5" height="1" fill="#000"/><rect x="859" y="85" width="3" height="1" fill="#000"/><rect x="860" y="86" width="1" height="1" fill="#000"/><rect x="902" y="71" width="57" height="18" fill="#f0f0f0"/><rect x="902" y="71" width="57" height="1" fill="#ffffff"/><rect x="902" y="71" width="1" height="18" fill="#ffffff"/><rect x="902" y="88" width="57" height="1" fill="#696969"/><rect x="958" y="71" width="1" height="18" fill="#696969"/><rect x="903" y="72" width="55" height="1" fill="#e3e3e3"/><rect x="903" y="72" width="1" height="16" fill="#e3e3e3"/><rect x="903" y="87" width="55" height="1" fill="#a0a0a0"/><rect x="957" y="72" width="1" height="16" fill="#a0a0a0"/><text transform="translate(931.00,83.80) scale(0.87,1)" fill="#000" font-size="12" text-anchor="middle">Gun data</text><rect x="694" y="99" width="305" height="153" fill="#ffffff"/><rect x="694" y="99" width="305" height="1" fill="#a0a0a0"/><rect x="694" y="99" width="1" height="153" fill="#a0a0a0"/><rect x="694" y="251" width="305" height="1" fill="#ffffff"/><rect x="998" y="99" width="1" height="153" fill="#ffffff"/><rect x="695" y="100" width="303" height="1" fill="#696969"/><rect x="695" y="100" width="1" height="151" fill="#696969"/><rect x="695" y="250" width="303" height="1" fill="#e3e3e3"/><rect x="997" y="100" width="1" height="151" fill="#e3e3e3"/><rect x="696" y="101" width="150" height="16" fill="#f0f0f0"/><rect x="696" y="101" width="150" height="1" fill="#ffffff"/><rect x="696" y="101" width="1" height="16" fill="#ffffff"/><rect x="696" y="116" width="150" height="1" fill="#696969"/><rect x="845" y="101" width="1" height="16" fill="#696969"/><rect x="697" y="102" width="148" height="1" fill="#e3e3e3"/><rect x="697" y="102" width="1" height="14" fill="#e3e3e3"/><rect x="697" y="115" width="148" height="1" fill="#a0a0a0"/><rect x="844" y="102" width="1" height="14" fill="#a0a0a0"/><rect x="846" y="101" width="70" height="16" fill="#f0f0f0"/><rect x="846" y="101" width="70" height="1" fill="#ffffff"/><rect x="846" y="101" width="1" height="16" fill="#ffffff"/><rect x="846" y="116" width="70" height="1" fill="#696969"/><rect x="915" y="101" width="1" height="16" fill="#696969"/><rect x="847" y="102" width="68" height="1" fill="#e3e3e3"/><rect x="847" y="102" width="1" height="14" fill="#e3e3e3"/><rect x="847" y="115" width="68" height="1" fill="#a0a0a0"/><rect x="914" y="102" width="1" height="14" fill="#a0a0a0"/><rect x="916" y="101" width="75" height="16" fill="#f0f0f0"/><rect x="916" y="101" width="75" height="1" fill="#ffffff"/><rect x="916" y="101" width="1" height="16" fill="#ffffff"/><rect x="916" y="116" width="75" height="1" fill="#696969"/><rect x="990" y="101" width="1" height="16" fill="#696969"/><rect x="917" y="102" width="73" height="1" fill="#e3e3e3"/><rect x="917" y="102" width="1" height="14" fill="#e3e3e3"/><rect x="917" y="115" width="73" height="1" fill="#a0a0a0"/><rect x="989" y="102" width="1" height="14" fill="#a0a0a0"/><rect x="991" y="101" width="6" height="16" fill="#f0f0f0"/><rect x="991" y="101" width="6" height="1" fill="#ffffff"/><rect x="991" y="101" width="1" height="16" fill="#ffffff"/><rect x="991" y="116" width="6" height="1" fill="#696969"/><rect x="991" y="115" width="6" height="1" fill="#a0a0a0"/><text transform="translate(702.50,113.80) scale(0.87,1)" fill="#000" font-size="12">Position</text><text transform="translate(852.50,113.80) scale(0.87,1)" fill="#000" font-size="12">Guns/turret</text><text transform="translate(922.50,113.80) scale(0.87,1)" fill="#000" font-size="12">Weight/turret</text><text transform="translate(700.00,130.80) scale(0.87,1)" fill="#000" font-size="12">A - Forward</text><text transform="translate(853.00,130.80) scale(0.87,1)" fill="#000" font-size="12">2</text><text transform="translate(923.00,130.80) scale(0.87,1)" fill="#000" font-size="12">1354</text><text transform="translate(700.00,144.80) scale(0.87,1)" fill="#000" font-size="12">Y - Aft</text><text transform="translate(853.00,144.80) scale(0.87,1)" fill="#000" font-size="12">2</text><text transform="translate(923.00,144.80) scale(0.87,1)" fill="#000" font-size="12">1354</text><rect x="694" y="259" width="66" height="17" fill="#f0f0f0"/><rect x="694" y="259" width="66" height="1" fill="#ffffff"/><rect x="694" y="259" width="1" height="17" fill="#ffffff"/><rect x="694" y="275" width="66" height="1" fill="#696969"/><rect x="759" y="259" width="1" height="17" fill="#696969"/><rect x="695" y="260" width="64" height="1" fill="#e3e3e3"/><rect x="695" y="260" width="1" height="15" fill="#e3e3e3"/><rect x="695" y="274" width="64" height="1" fill="#a0a0a0"/><rect x="758" y="260" width="1" height="15" fill="#a0a0a0"/><text transform="translate(727.50,271.30) scale(0.87,1)" fill="#000" font-size="12" text-anchor="middle">Add turret</text><rect x="774" y="259" width="66" height="17" fill="#f0f0f0"/><rect x="774" y="259" width="66" height="1" fill="#ffffff"/><rect x="774" y="259" width="1" height="17" fill="#ffffff"/><rect x="774" y="275" width="66" height="1" fill="#696969"/><rect x="839" y="259" width="1" height="17" fill="#696969"/><rect x="775" y="260" width="64" height="1" fill="#e3e3e3"/><rect x="775" y="260" width="1" height="15" fill="#e3e3e3"/><rect x="775" y="274" width="64" height="1" fill="#a0a0a0"/><rect x="838" y="260" width="1" height="15" fill="#a0a0a0"/><text transform="translate(807.50,271.30) scale(0.87,1)" fill="#000" font-size="12" text-anchor="middle">Delete turret</text><rect x="854" y="259" width="65" height="17" fill="#f0f0f0"/><rect x="854" y="259" width="65" height="1" fill="#ffffff"/><rect x="854" y="259" width="1" height="17" fill="#ffffff"/><rect x="854" y="275" width="65" height="1" fill="#696969"/><rect x="918" y="259" width="1" height="17" fill="#696969"/><rect x="855" y="260" width="63" height="1" fill="#e3e3e3"/><rect x="855" y="260" width="1" height="15" fill="#e3e3e3"/><rect x="855" y="274" width="63" height="1" fill="#a0a0a0"/><rect x="917" y="260" width="1" height="15" fill="#a0a0a0"/><text transform="translate(887.00,271.30) scale(0.87,1)" fill="#000" font-size="12" text-anchor="middle">Clear turrets</text><rect x="934" y="259" width="65" height="17" fill="#f0f0f0"/><rect x="934" y="259" width="65" height="1" fill="#ffffff"/><rect x="934" y="259" width="1" height="17" fill="#ffffff"/><rect x="934" y="275" width="65" height="1" fill="#696969"/><rect x="998" y="259" width="1" height="17" fill="#696969"/><rect x="935" y="260" width="63" height="1" fill="#e3e3e3"/><rect x="935" y="260" width="1" height="15" fill="#e3e3e3"/><rect x="935" y="274" width="63" height="1" fill="#a0a0a0"/><rect x="997" y="260" width="1" height="15" fill="#a0a0a0"/><text transform="translate(968.00,273.30) scale(0.87,1)" fill="#ffffff" font-size="12" text-anchor="middle">Rebuild?</text><text transform="translate(967.00,272.30) scale(0.87,1)" fill="#a0a0a0" font-size="12" text-anchor="middle">Rebuild?</text><text transform="translate(695.50,298.80) scale(0.87,1)" fill="#000" font-size="12">Rounds per gun</text><rect x="782" y="283" width="48" height="21" fill="#ffffff"/><rect x="782" y="283" width="48" height="1" fill="#a0a0a0"/><rect x="782" y="283" width="1" height="21" fill="#a0a0a0"/><rect x="782" y="303" width="48" height="1" fill="#ffffff"/><rect x="829" y="283" width="1" height="21" fill="#ffffff"/><rect x="783" y="284" width="46" height="1" fill="#696969"/><rect x="783" y="284" width="1" height="19" fill="#696969"/><rect x="783" y="302" width="46" height="1" fill="#e3e3e3"/><rect x="828" y="284" width="1" height="19" fill="#e3e3e3"/><text transform="translate(786.50,296.80) scale(0.87,1)" fill="#000" font-size="12">120</text><rect x="813" y="286" width="15" height="7" fill="#f0f0f0"/><rect x="813" y="286" width="15" height="1" fill="#e3e3e3"/><rect x="813" y="286" width="1" height="7" fill="#e3e3e3"/><rect x="813" y="292" width="15" height="1" fill="#696969"/><rect x="827" y="286" width="1" height="7" fill="#696969"/><rect x="814" y="287" width="13" height="1" fill="#ffffff"/><rect x="814" y="291" width="13" height="1" fill="#a0a0a0"/><rect x="826" y="287" width="1" height="5" fill="#a0a0a0"/><rect x="820" y="288" width="1" height="1" fill="#000"/><rect x="819" y="289" width="3" height="1" fill="#000"/><rect x="818" y="290" width="5" height="1" fill="#000"/><rect x="817" y="291" width="7" height="1" fill="#000"/><rect x="813" y="293" width="15" height="8" fill="#f0f0f0"/><rect x="813" y="293" width="15" height="1" fill="#e3e3e3"/><rect x="813" y="293" width="1" height="8" fill="#e3e3e3"/><rect x="813" y="300" width="15" height="1" fill="#696969"/><rect x="827" y="293" width="1" height="8" fill="#696969"/><rect x="814" y="294" width="13" height="1" fill="#ffffff"/><rect x="814" y="299" width="13" height="1" fill="#a0a0a0"/><rect x="826" y="294" width="1" height="6" fill="#a0a0a0"/><rect x="817" y="295" width="7" height="1" fill="#000"/><rect x="818" y="296" width="5" height="1" fill="#000"/><rect x="819" y="297" width="3" height="1" fill="#000"/><rect x="820" y="298" width="1" height="1" fill="#000"/><text transform="translate(842.50,298.80) scale(0.87,1)" fill="#000" font-size="12">ammo weight</text><rect x="918" y="287" width="49" height="17" fill="#f0f0f0"/><rect x="918" y="287" width="49" height="1" fill="#a0a0a0"/><rect x="918" y="287" width="1" height="17" fill="#a0a0a0"/><rect x="918" y="303" width="49" height="1" fill="#ffffff"/><rect x="966" y="287" width="1" height="17" fill="#ffffff"/><text transform="translate(965.50,299.30) scale(0.87,1)" fill="#000" font-size="12" text-anchor="end">954</text><text transform="translate(695.50,327.80) scale(0.87,1)" fill="#000" font-size="12">Fire control</text><rect x="754" y="313" width="128" height="20" fill="#ffffff"/><rect x="754" y="313" width="128" height="1" fill="#a0a0a0"/><rect x="754" y="313" width="1" height="20" fill="#a0a0a0"/><rect x="754" y="332" width="128" height="1" fill="#ffffff"/><rect x="881" y="313" width="1" height="20" fill="#ffffff"/><rect x="755" y="314" width="126" height="1" fill="#696969"/><rect x="755" y="314" width="1" height="18" fill="#696969"/><rect x="755" y="331" width="126" height="1" fill="#e3e3e3"/><rect x="880" y="314" width="1" height="18" fill="#e3e3e3"/><text transform="translate(758.50,327.80) scale(0.87,1)" fill="#000" font-size="12">Central rangefinder</text><rect x="864" y="315" width="16" height="16" fill="#f0f0f0"/><rect x="864" y="315" width="16" height="1" fill="#ffffff"/><rect x="864" y="315" width="1" height="16" fill="#ffffff"/><rect x="864" y="330" width="16" height="1" fill="#696969"/><rect x="879" y="315" width="1" height="16" fill="#696969"/><rect x="865" y="316" width="14" height="1" fill="#e3e3e3"/><rect x="865" y="316" width="1" height="14" fill="#e3e3e3"/><rect x="865" y="329" width="14" height="1" fill="#a0a0a0"/><rect x="878" y="316" width="1" height="14" fill="#a0a0a0"/><rect x="869" y="322" width="7" height="1" fill="#000"/><rect x="870" y="323" width="5" height="1" fill="#000"/><rect x="871" y="324" width="3" height="1" fill="#000"/><rect x="872" y="325" width="1" height="1" fill="#000"/><text transform="translate(895.50,325.80) scale(0.87,1)" fill="#000" font-size="12">FC Positions</text><rect x="958" y="311" width="41" height="21" fill="#ffffff"/><rect x="958" y="311" width="41" height="1" fill="#a0a0a0"/><rect x="958" y="311" width="1" height="21" fill="#a0a0a0"/><rect x="958" y="331" width="41" height="1" fill="#ffffff"/><rect x="998" y="311" width="1" height="21" fill="#ffffff"/><rect x="959" y="312" width="39" height="1" fill="#696969"/><rect x="959" y="312" width="1" height="19" fill="#696969"/><rect x="959" y="330" width="39" height="1" fill="#e3e3e3"/><rect x="997" y="312" width="1" height="19" fill="#e3e3e3"/><text transform="translate(962.50,324.80) scale(0.87,1)" fill="#000" font-size="12">2</text><rect x="982" y="314" width="15" height="7" fill="#f0f0f0"/><rect x="982" y="314" width="15" height="1" fill="#e3e3e3"/><rect x="982" y="314" width="1" height="7" fill="#e3e3e3"/><rect x="982" y="320" width="15" height="1" fill="#696969"/><rect x="996" y="314" width="1" height="7" fill="#696969"/><rect x="983" y="315" width="13" height="1" fill="#ffffff"/><rect x="983" y="319" width="13" height="1" fill="#a0a0a0"/><rect x="995" y="315" width="1" height="5" fill="#a0a0a0"/><rect x="989" y="316" width="1" height="1" fill="#000"/><rect x="988" y="317" width="3" height="1" fill="#000"/><rect x="987" y="318" width="5" height="1" fill="#000"/><rect x="986" y="319" width="7" height="1" fill="#000"/><rect x="982" y="321" width="15" height="8" fill="#f0f0f0"/><rect x="982" y="321" width="15" height="1" fill="#e3e3e3"/><rect x="982" y="321" width="1" height="8" fill="#e3e3e3"/><rect x="982" y="328" width="15" height="1" fill="#696969"/><rect x="996" y="321" width="1" height="8" fill="#696969"/><rect x="983" y="322" width="13" height="1" fill="#ffffff"/><rect x="983" y="327" width="13" height="1" fill="#a0a0a0"/><rect x="995" y="322" width="1" height="6" fill="#a0a0a0"/><rect x="986" y="323" width="7" height="1" fill="#000"/><rect x="987" y="324" width="5" height="1" fill="#000"/><rect x="988" y="325" width="3" height="1" fill="#000"/><rect x="989" y="326" width="1" height="1" fill="#000"/><text transform="translate(697.50,351.80) scale(0.87,1)" fill="#000" font-size="12">weight</text><rect x="756" y="340" width="41" height="17" fill="#f0f0f0"/><rect x="756" y="340" width="41" height="1" fill="#a0a0a0"/><rect x="756" y="340" width="1" height="17" fill="#a0a0a0"/><rect x="756" y="356" width="41" height="1" fill="#ffffff"/><rect x="796" y="340" width="1" height="17" fill="#ffffff"/><text transform="translate(795.50,352.30) scale(0.87,1)" fill="#000" font-size="12" text-anchor="end">57</text><text transform="translate(808.50,351.80) scale(0.87,1)" fill="#000" font-size="12">cost</text><rect x="838" y="340" width="41" height="17" fill="#f0f0f0"/><rect x="838" y="340" width="41" height="1" fill="#a0a0a0"/><rect x="838" y="340" width="1" height="17" fill="#a0a0a0"/><rect x="838" y="356" width="41" height="1" fill="#ffffff"/><rect x="878" y="340" width="1" height="17" fill="#ffffff"/><text transform="translate(877.50,352.30) scale(0.87,1)" fill="#000" font-size="12" text-anchor="end">187</text><rect x="702" y="369" width="13" height="13" fill="#f0f0f0"/><rect x="702" y="369" width="13" height="1" fill="#a0a0a0"/><rect x="702" y="369" width="1" height="13" fill="#a0a0a0"/><rect x="702" y="381" width="13" height="1" fill="#ffffff"/><rect x="714" y="369" width="1" height="13" fill="#ffffff"/><rect x="703" y="370" width="11" height="1" fill="#696969"/><rect x="703" y="370" width="1" height="11" fill="#696969"/><rect x="703" y="380" width="11" height="1" fill="#e3e3e3"/><rect x="713" y="370" width="1" height="11" fill="#e3e3e3"/><text transform="translate(721.50,381.80) scale(0.87,1)" fill="#ffffff" font-size="12">Increased elevation</text><text transform="translate(720.50,380.80) scale(0.87,1)" fill="#a0a0a0" font-size="12">Increased elevation</text><rect x="838" y="371" width="13" height="13" fill="#f0f0f0"/><rect x="838" y="371" width="13" height="1" fill="#a0a0a0"/><rect x="838" y="371" width="1" height="13" fill="#a0a0a0"/><rect x="838" y="383" width="13" height="1" fill="#ffffff"/><rect x="850" y="371" width="1" height="13" fill="#ffffff"/><rect x="839" y="372" width="11" height="1" fill="#696969"/><rect x="839" y="372" width="1" height="11" fill="#696969"/><rect x="839" y="382" width="11" height="1" fill="#e3e3e3"/><rect x="849" y="372" width="1" height="11" fill="#e3e3e3"/><text transform="translate(857.50,382.80) scale(0.87,1)" fill="#ffffff" font-size="12">DP</text><text transform="translate(856.50,381.80) scale(0.87,1)" fill="#a0a0a0" font-size="12">DP</text><rect x="702" y="391" width="13" height="13" fill="#ffffff"/><rect x="702" y="391" width="13" height="1" fill="#a0a0a0"/><rect x="702" y="391" width="1" height="13" fill="#a0a0a0"/><rect x="702" y="403" width="13" height="1" fill="#ffffff"/><rect x="714" y="391" width="1" height="13" fill="#ffffff"/><rect x="703" y="392" width="11" height="1" fill="#696969"/><rect x="703" y="392" width="1" height="11" fill="#696969"/><rect x="703" y="402" width="11" height="1" fill="#e3e3e3"/><rect x="713" y="392" width="1" height="11" fill="#e3e3e3"/><text transform="translate(720.50,401.30) scale(0.87,1)" fill="#000" font-size="12">Cross deck fire</text><rect x="838" y="391" width="13" height="13" fill="#f0f0f0"/><rect x="838" y="391" width="13" height="1" fill="#a0a0a0"/><rect x="838" y="391" width="1" height="13" fill="#a0a0a0"/><rect x="838" y="403" width="13" height="1" fill="#ffffff"/><rect x="850" y="391" width="1" height="13" fill="#ffffff"/><rect x="839" y="392" width="11" height="1" fill="#696969"/><rect x="839" y="392" width="1" height="11" fill="#696969"/><rect x="839" y="402" width="11" height="1" fill="#e3e3e3"/><rect x="849" y="392" width="1" height="11" fill="#e3e3e3"/><text transform="translate(857.50,403.80) scale(0.87,1)" fill="#ffffff" font-size="12">Autoloader</text><text transform="translate(856.50,402.80) scale(0.87,1)" fill="#a0a0a0" font-size="12">Autoloader</text><rect x="686" y="427" width="320" height="1" fill="#a0a0a0"/><rect x="686" y="427" width="1" height="102" fill="#a0a0a0"/><rect x="686" y="528" width="320" height="1" fill="#a0a0a0"/><rect x="1005" y="427" width="1" height="102" fill="#a0a0a0"/><rect x="687" y="428" width="318" height="1" fill="#ffffff"/><rect x="687" y="428" width="1" height="100" fill="#ffffff"/><rect x="686" y="529" width="321" height="1" fill="#ffffff"/><rect x="1006" y="427" width="1" height="103" fill="#ffffff"/><rect x="693" y="422" width="78" height="14" fill="#f0f0f0"/><text transform="translate(694.50,432.80) scale(0.87,1)" fill="#000" font-size="12">Secondary guns</text><text transform="translate(695.50,455.80) scale(0.87,1)" fill="#000" font-size="12">Calibre</text><rect x="742" y="441" width="48" height="22" fill="#ffffff"/><rect x="742" y="441" width="48" height="1" fill="#a0a0a0"/><rect x="742" y="441" width="1" height="22" fill="#a0a0a0"/><rect x="742" y="462" width="48" height="1" fill="#ffffff"/><rect x="789" y="441" width="1" height="22" fill="#ffffff"/><rect x="743" y="442" width="46" height="1" fill="#696969"/><rect x="743" y="442" width="1" height="20" fill="#696969"/><rect x="743" y="461" width="46" height="1" fill="#e3e3e3"/><rect x="788" y="442" width="1" height="20" fill="#e3e3e3"/><text transform="translate(746.50,455.30) scale(0.87,1)" fill="#000" font-size="12">6</text><rect x="773" y="444" width="15" height="8" fill="#f0f0f0"/><rect x="773" y="444" width="15" height="1" fill="#e3e3e3"/><rect x="773" y="444" width="1" height="8" fill="#e3e3e3"/><rect x="773" y="451" width="15" height="1" fill="#696969"/><rect x="787" y="444" width="1" height="8" fill="#696969"/><rect x="774" y="445" width="13" height="1" fill="#ffffff"/><rect x="774" y="450" width="13" height="1" fill="#a0a0a0"/><rect x="786" y="445" width="1" height="6" fill="#a0a0a0"/><rect x="780" y="447" width="1" height="1" fill="#000"/><rect x="779" y="448" width="3" height="1" fill="#000"/><rect x="778" y="449" width="5" height="1" fill="#000"/><rect x="777" y="450" width="7" height="1" fill="#000"/><rect x="773" y="452" width="15" height="8" fill="#f0f0f0"/><rect x="773" y="452" width="15" height="1" fill="#e3e3e3"/><rect x="773" y="452" width="1" height="8" fill="#e3e3e3"/><rect x="773" y="459" width="15" height="1" fill="#696969"/><rect x="787" y="452" width="1" height="8" fill="#696969"/><rect x="774" y="453" width="13" height="1" fill="#ffffff"/><rect x="774" y="458" width="13" height="1" fill="#a0a0a0"/><rect x="786" y="453" width="1" height="6" fill="#a0a0a0"/><rect x="777" y="454" width="7" height="1" fill="#000"/><rect x="778" y="455" width="5" height="1" fill="#000"/><rect x="779" y="456" width="3" height="1" fill="#000"/><rect x="780" y="457" width="1" height="1" fill="#000"/><text transform="translate(802.50,455.80) scale(0.87,1)" fill="#000" font-size="12">Number</text><rect x="846" y="441" width="48" height="22" fill="#ffffff"/><rect x="846" y="441" width="48" height="1" fill="#a0a0a0"/><rect x="846" y="441" width="1" height="22" fill="#a0a0a0"/><rect x="846" y="462" width="48" height="1" fill="#ffffff"/><rect x="893" y="441" width="1" height="22" fill="#ffffff"/><rect x="847" y="442" width="46" height="1" fill="#696969"/><rect x="847" y="442" width="1" height="20" fill="#696969"/><rect x="847" y="461" width="46" height="1" fill="#e3e3e3"/><rect x="892" y="442" width="1" height="20" fill="#e3e3e3"/><text transform="translate(850.50,455.30) scale(0.87,1)" fill="#000" font-size="12">8</text><rect x="877" y="444" width="15" height="8" fill="#f0f0f0"/><rect x="877" y="444" width="15" height="1" fill="#e3e3e3"/><rect x="877" y="444" width="1" height="8" fill="#e3e3e3"/><rect x="877" y="451" width="15" height="1" fill="#696969"/><rect x="891" y="444" width="1" height="8" fill="#696969"/><rect x="878" y="445" width="13" height="1" fill="#ffffff"/><rect x="878" y="450" width="13" height="1" fill="#a0a0a0"/><rect x="890" y="445" width="1" height="6" fill="#a0a0a0"/><rect x="884" y="447" width="1" height="1" fill="#000"/><rect x="883" y="448" width="3" height="1" fill="#000"/><rect x="882" y="449" width="5" height="1" fill="#000"/><rect x="881" y="450" width="7" height="1" fill="#000"/><rect x="877" y="452" width="15" height="8" fill="#f0f0f0"/><rect x="877" y="452" width="15" height="1" fill="#e3e3e3"/><rect x="877" y="452" width="1" height="8" fill="#e3e3e3"/><rect x="877" y="459" width="15" height="1" fill="#696969"/><rect x="891" y="452" width="1" height="8" fill="#696969"/><rect x="878" y="453" width="13" height="1" fill="#ffffff"/><rect x="878" y="458" width="13" height="1" fill="#a0a0a0"/><rect x="890" y="453" width="1" height="6" fill="#a0a0a0"/><rect x="881" y="454" width="7" height="1" fill="#000"/><rect x="882" y="455" width="5" height="1" fill="#000"/><rect x="883" y="456" width="3" height="1" fill="#000"/><rect x="884" y="457" width="1" height="1" fill="#000"/><text transform="translate(903.50,455.80) scale(0.87,1)" fill="#000" font-size="12">Quality</text><rect x="942" y="441" width="40" height="22" fill="#ffffff"/><rect x="942" y="441" width="40" height="1" fill="#a0a0a0"/><rect x="942" y="441" width="1" height="22" fill="#a0a0a0"/><rect x="942" y="462" width="40" height="1" fill="#ffffff"/><rect x="981" y="441" width="1" height="22" fill="#ffffff"/><rect x="943" y="442" width="38" height="1" fill="#696969"/><rect x="943" y="442" width="1" height="20" fill="#696969"/><rect x="943" y="461" width="38" height="1" fill="#e3e3e3"/><rect x="980" y="442" width="1" height="20" fill="#e3e3e3"/><text transform="translate(946.50,455.30) scale(0.87,1)" fill="#6d6d6d" font-size="12">0</text><rect x="965" y="444" width="15" height="8" fill="#f0f0f0"/><rect x="965" y="444" width="15" height="1" fill="#e3e3e3"/><rect x="965" y="444" width="1" height="8" fill="#e3e3e3"/><rect x="965" y="451" width="15" height="1" fill="#696969"/><rect x="979" y="444" width="1" height="8" fill="#696969"/><rect x="966" y="445" width="13" height="1" fill="#ffffff"/><rect x="966" y="450" width="13" height="1" fill="#a0a0a0"/><rect x="978" y="445" width="1" height="6" fill="#a0a0a0"/><rect x="972" y="447" width="1" height="1" fill="#000"/><rect x="971" y="448" width="3" height="1" fill="#000"/><rect x="970" y="449" width="5" height="1" fill="#000"/><rect x="969" y="450" width="7" height="1" fill="#000"/><rect x="965" y="452" width="15" height="8" fill="#f0f0f0"/><rect x="965" y="452" width="15" height="1" fill="#e3e3e3"/><rect x="965" y="452" width="1" height="8" fill="#e3e3e3"/><rect x="965" y="459" width="15" height="1" fill="#696969"/><rect x="979" y="452" width="1" height="8" fill="#696969"/><rect x="966" y="453" width="13" height="1" fill="#ffffff"/><rect x="966" y="458" width="13" height="1" fill="#a0a0a0"/><rect x="978" y="453" width="1" height="6" fill="#a0a0a0"/><rect x="969" y="454" width="7" height="1" fill="#000"/><rect x="970" y="455" width="5" height="1" fill="#000"/><rect x="971" y="456" width="3" height="1" fill="#000"/><rect x="972" y="457" width="1" height="1" fill="#000"/><text transform="translate(695.50,485.30) scale(0.87,1)" fill="#000" font-size="12">Guns / turret</text><rect x="758" y="475" width="72" height="20" fill="#ffffff"/><rect x="758" y="475" width="72" height="1" fill="#a0a0a0"/><rect x="758" y="475" width="1" height="20" fill="#a0a0a0"/><rect x="758" y="494" width="72" height="1" fill="#ffffff"/><rect x="829" y="475" width="1" height="20" fill="#ffffff"/><rect x="759" y="476" width="70" height="1" fill="#696969"/><rect x="759" y="476" width="1" height="18" fill="#696969"/><rect x="759" y="493" width="70" height="1" fill="#e3e3e3"/><rect x="828" y="476" width="1" height="18" fill="#e3e3e3"/><rect x="812" y="477" width="16" height="16" fill="#f0f0f0"/><rect x="812" y="477" width="16" height="1" fill="#ffffff"/><rect x="812" y="477" width="1" height="16" fill="#ffffff"/><rect x="812" y="492" width="16" height="1" fill="#696969"/><rect x="827" y="477" width="1" height="16" fill="#696969"/><rect x="813" y="478" width="14" height="1" fill="#e3e3e3"/><rect x="813" y="478" width="1" height="14" fill="#e3e3e3"/><rect x="813" y="491" width="14" height="1" fill="#a0a0a0"/><rect x="826" y="478" width="1" height="14" fill="#a0a0a0"/><rect x="817" y="484" width="7" height="1" fill="#000"/><rect x="818" y="485" width="5" height="1" fill="#000"/><rect x="819" y="486" width="3" height="1" fill="#000"/><rect x="820" y="487" width="1" height="1" fill="#000"/><clipPath id="cm"><rect x="760" y="477" width="51" height="16"/></clipPath><g clip-path="url(#cm)"><text transform="translate(762.50,488.80) scale(0.87,1)" fill="#000" font-size="12">Casemates</text></g><text transform="translate(839.50,489.30) scale(0.87,1)" fill="#000" font-size="12">Weight</text><rect x="881" y="476" width="45" height="17" fill="#f0f0f0"/><rect x="881" y="476" width="45" height="1" fill="#a0a0a0"/><rect x="881" y="476" width="1" height="17" fill="#a0a0a0"/><rect x="881" y="492" width="45" height="1" fill="#ffffff"/><rect x="925" y="476" width="1" height="17" fill="#ffffff"/><text transform="translate(924.50,488.30) scale(0.87,1)" fill="#000" font-size="12" text-anchor="end">634</text><rect x="695" y="506" width="13" height="13" fill="#f0f0f0"/><rect x="695" y="506" width="13" height="1" fill="#a0a0a0"/><rect x="695" y="506" width="1" height="13" fill="#a0a0a0"/><rect x="695" y="518" width="13" height="1" fill="#ffffff"/><rect x="707" y="506" width="1" height="13" fill="#ffffff"/><rect x="696" y="507" width="11" height="1" fill="#696969"/><rect x="696" y="507" width="1" height="11" fill="#696969"/><rect x="696" y="517" width="11" height="1" fill="#e3e3e3"/><rect x="706" y="507" width="1" height="11" fill="#e3e3e3"/><text transform="translate(713.50,517.80) scale(0.87,1)" fill="#ffffff" font-size="12">Director</text><text transform="translate(712.50,516.80) scale(0.87,1)" fill="#a0a0a0" font-size="12">Director</text><rect x="759" y="506" width="13" height="13" fill="#f0f0f0"/><rect x="759" y="506" width="13" height="1" fill="#a0a0a0"/><rect x="759" y="506" width="1" height="13" fill="#a0a0a0"/><rect x="759" y="518" width="13" height="1" fill="#ffffff"/><rect x="771" y="506" width="1" height="13" fill="#ffffff"/><rect x="760" y="507" width="11" height="1" fill="#696969"/><rect x="760" y="507" width="1" height="11" fill="#696969"/><rect x="760" y="517" width="11" height="1" fill="#e3e3e3"/><rect x="770" y="507" width="1" height="11" fill="#e3e3e3"/><text transform="translate(777.50,517.80) scale(0.87,1)" fill="#ffffff" font-size="12">DP</text><text transform="translate(776.50,516.80) scale(0.87,1)" fill="#a0a0a0" font-size="12">DP</text><rect x="806" y="506" width="13" height="13" fill="#f0f0f0"/><rect x="806" y="506" width="13" height="1" fill="#a0a0a0"/><rect x="806" y="506" width="1" height="13" fill="#a0a0a0"/><rect x="806" y="518" width="13" height="1" fill="#ffffff"/><rect x="818" y="506" width="1" height="13" fill="#ffffff"/><rect x="807" y="507" width="11" height="1" fill="#696969"/><rect x="807" y="507" width="1" height="11" fill="#696969"/><rect x="807" y="517" width="11" height="1" fill="#e3e3e3"/><rect x="817" y="507" width="1" height="11" fill="#e3e3e3"/><text transform="translate(825.50,517.80) scale(0.87,1)" fill="#ffffff" font-size="12">Autoloader</text><text transform="translate(824.50,516.80) scale(0.87,1)" fill="#a0a0a0" font-size="12">Autoloader</text><rect x="686" y="548" width="320" height="1" fill="#a0a0a0"/><rect x="686" y="548" width="1" height="102" fill="#a0a0a0"/><rect x="686" y="649" width="320" height="1" fill="#a0a0a0"/><rect x="1005" y="548" width="1" height="102" fill="#a0a0a0"/><rect x="687" y="549" width="318" height="1" fill="#ffffff"/><rect x="687" y="549" width="1" height="100" fill="#ffffff"/><rect x="686" y="650" width="321" height="1" fill="#ffffff"/><rect x="1006" y="548" width="1" height="103" fill="#ffffff"/><rect x="694" y="544.5" width="62" height="14.0" fill="#f0f0f0"/><text transform="translate(695.50,555.30) scale(0.87,1)" fill="#000" font-size="12">Tertiary guns</text><text transform="translate(696.50,576.80) scale(0.87,1)" fill="#000" font-size="12">Calibre</text><rect x="742" y="562" width="48" height="21" fill="#ffffff"/><rect x="742" y="562" width="48" height="1" fill="#a0a0a0"/><rect x="742" y="562" width="1" height="21" fill="#a0a0a0"/><rect x="742" y="582" width="48" height="1" fill="#ffffff"/><rect x="789" y="562" width="1" height="21" fill="#ffffff"/><rect x="743" y="563" width="46" height="1" fill="#696969"/><rect x="743" y="563" width="1" height="19" fill="#696969"/><rect x="743" y="581" width="46" height="1" fill="#e3e3e3"/><rect x="788" y="563" width="1" height="19" fill="#e3e3e3"/><text transform="translate(746.50,575.80) scale(0.87,1)" fill="#000" font-size="12">4</text><rect x="773" y="565" width="15" height="7" fill="#f0f0f0"/><rect x="773" y="565" width="15" height="1" fill="#e3e3e3"/><rect x="773" y="565" width="1" height="7" fill="#e3e3e3"/><rect x="773" y="571" width="15" height="1" fill="#696969"/><rect x="787" y="565" width="1" height="7" fill="#696969"/><rect x="774" y="566" width="13" height="1" fill="#ffffff"/><rect x="774" y="570" width="13" height="1" fill="#a0a0a0"/><rect x="786" y="566" width="1" height="5" fill="#a0a0a0"/><rect x="780" y="567" width="1" height="1" fill="#000"/><rect x="779" y="568" width="3" height="1" fill="#000"/><rect x="778" y="569" width="5" height="1" fill="#000"/><rect x="777" y="570" width="7" height="1" fill="#000"/><rect x="773" y="572" width="15" height="8" fill="#f0f0f0"/><rect x="773" y="572" width="15" height="1" fill="#e3e3e3"/><rect x="773" y="572" width="1" height="8" fill="#e3e3e3"/><rect x="773" y="579" width="15" height="1" fill="#696969"/><rect x="787" y="572" width="1" height="8" fill="#696969"/><rect x="774" y="573" width="13" height="1" fill="#ffffff"/><rect x="774" y="578" width="13" height="1" fill="#a0a0a0"/><rect x="786" y="573" width="1" height="6" fill="#a0a0a0"/><rect x="777" y="574" width="7" height="1" fill="#000"/><rect x="778" y="575" width="5" height="1" fill="#000"/><rect x="779" y="576" width="3" height="1" fill="#000"/><rect x="780" y="577" width="1" height="1" fill="#000"/><text transform="translate(802.50,576.80) scale(0.87,1)" fill="#000" font-size="12">Number</text><rect x="846" y="562" width="48" height="21" fill="#ffffff"/><rect x="846" y="562" width="48" height="1" fill="#a0a0a0"/><rect x="846" y="562" width="1" height="21" fill="#a0a0a0"/><rect x="846" y="582" width="48" height="1" fill="#ffffff"/><rect x="893" y="562" width="1" height="21" fill="#ffffff"/><rect x="847" y="563" width="46" height="1" fill="#696969"/><rect x="847" y="563" width="1" height="19" fill="#696969"/><rect x="847" y="581" width="46" height="1" fill="#e3e3e3"/><rect x="892" y="563" width="1" height="19" fill="#e3e3e3"/><text transform="translate(850.50,575.80) scale(0.87,1)" fill="#000" font-size="12">10</text><rect x="877" y="565" width="15" height="7" fill="#f0f0f0"/><rect x="877" y="565" width="15" height="1" fill="#e3e3e3"/><rect x="877" y="565" width="1" height="7" fill="#e3e3e3"/><rect x="877" y="571" width="15" height="1" fill="#696969"/><rect x="891" y="565" width="1" height="7" fill="#696969"/><rect x="878" y="566" width="13" height="1" fill="#ffffff"/><rect x="878" y="570" width="13" height="1" fill="#a0a0a0"/><rect x="890" y="566" width="1" height="5" fill="#a0a0a0"/><rect x="884" y="567" width="1" height="1" fill="#000"/><rect x="883" y="568" width="3" height="1" fill="#000"/><rect x="882" y="569" width="5" height="1" fill="#000"/><rect x="881" y="570" width="7" height="1" fill="#000"/><rect x="877" y="572" width="15" height="8" fill="#f0f0f0"/><rect x="877" y="572" width="15" height="1" fill="#e3e3e3"/><rect x="877" y="572" width="1" height="8" fill="#e3e3e3"/><rect x="877" y="579" width="15" height="1" fill="#696969"/><rect x="891" y="572" width="1" height="8" fill="#696969"/><rect x="878" y="573" width="13" height="1" fill="#ffffff"/><rect x="878" y="578" width="13" height="1" fill="#a0a0a0"/><rect x="890" y="573" width="1" height="6" fill="#a0a0a0"/><rect x="881" y="574" width="7" height="1" fill="#000"/><rect x="882" y="575" width="5" height="1" fill="#000"/><rect x="883" y="576" width="3" height="1" fill="#000"/><rect x="884" y="577" width="1" height="1" fill="#000"/><rect x="849" y="565" width="1" height="15" fill="#000"/><text transform="translate(911.50,576.80) scale(0.87,1)" fill="#000" font-size="12">Quality</text><rect x="950" y="562" width="40" height="21" fill="#ffffff"/><rect x="950" y="562" width="40" height="1" fill="#a0a0a0"/><rect x="950" y="562" width="1" height="21" fill="#a0a0a0"/><rect x="950" y="582" width="40" height="1" fill="#ffffff"/><rect x="989" y="562" width="1" height="21" fill="#ffffff"/><rect x="951" y="563" width="38" height="1" fill="#696969"/><rect x="951" y="563" width="1" height="19" fill="#696969"/><rect x="951" y="581" width="38" height="1" fill="#e3e3e3"/><rect x="988" y="563" width="1" height="19" fill="#e3e3e3"/><text transform="translate(954.50,575.80) scale(0.87,1)" fill="#6d6d6d" font-size="12">0</text><rect x="973" y="565" width="15" height="7" fill="#f0f0f0"/><rect x="973" y="565" width="15" height="1" fill="#e3e3e3"/><rect x="973" y="565" width="1" height="7" fill="#e3e3e3"/><rect x="973" y="571" width="15" height="1" fill="#696969"/><rect x="987" y="565" width="1" height="7" fill="#696969"/><rect x="974" y="566" width="13" height="1" fill="#ffffff"/><rect x="974" y="570" width="13" height="1" fill="#a0a0a0"/><rect x="986" y="566" width="1" height="5" fill="#a0a0a0"/><rect x="980" y="567" width="1" height="1" fill="#000"/><rect x="979" y="568" width="3" height="1" fill="#000"/><rect x="978" y="569" width="5" height="1" fill="#000"/><rect x="977" y="570" width="7" height="1" fill="#000"/><rect x="973" y="572" width="15" height="8" fill="#f0f0f0"/><rect x="973" y="572" width="15" height="1" fill="#e3e3e3"/><rect x="973" y="572" width="1" height="8" fill="#e3e3e3"/><rect x="973" y="579" width="15" height="1" fill="#696969"/><rect x="987" y="572" width="1" height="8" fill="#696969"/><rect x="974" y="573" width="13" height="1" fill="#ffffff"/><rect x="974" y="578" width="13" height="1" fill="#a0a0a0"/><rect x="986" y="573" width="1" height="6" fill="#a0a0a0"/><rect x="977" y="574" width="7" height="1" fill="#000"/><rect x="978" y="575" width="5" height="1" fill="#000"/><rect x="979" y="576" width="3" height="1" fill="#000"/><rect x="980" y="577" width="1" height="1" fill="#000"/><text transform="translate(696.50,606.80) scale(0.87,1)" fill="#000" font-size="12">Guns / turret</text><rect x="766" y="595" width="72" height="20" fill="#ffffff"/><rect x="766" y="595" width="72" height="1" fill="#a0a0a0"/><rect x="766" y="595" width="1" height="20" fill="#a0a0a0"/><rect x="766" y="614" width="72" height="1" fill="#ffffff"/><rect x="837" y="595" width="1" height="20" fill="#ffffff"/><rect x="767" y="596" width="70" height="1" fill="#696969"/><rect x="767" y="596" width="1" height="18" fill="#696969"/><rect x="767" y="613" width="70" height="1" fill="#e3e3e3"/><rect x="836" y="596" width="1" height="18" fill="#e3e3e3"/><text transform="translate(770.50,609.80) scale(0.87,1)" fill="#000" font-size="12">1</text><rect x="820" y="597" width="16" height="16" fill="#f0f0f0"/><rect x="820" y="597" width="16" height="1" fill="#ffffff"/><rect x="820" y="597" width="1" height="16" fill="#ffffff"/><rect x="820" y="612" width="16" height="1" fill="#696969"/><rect x="835" y="597" width="1" height="16" fill="#696969"/><rect x="821" y="598" width="14" height="1" fill="#e3e3e3"/><rect x="821" y="598" width="1" height="14" fill="#e3e3e3"/><rect x="821" y="611" width="14" height="1" fill="#a0a0a0"/><rect x="834" y="598" width="1" height="14" fill="#a0a0a0"/><rect x="825" y="604" width="7" height="1" fill="#000"/><rect x="826" y="605" width="5" height="1" fill="#000"/><rect x="827" y="606" width="3" height="1" fill="#000"/><rect x="828" y="607" width="1" height="1" fill="#000"/><text transform="translate(844.50,608.80) scale(0.87,1)" fill="#000" font-size="12">Weight</text><rect x="883" y="597" width="44" height="17" fill="#f0f0f0"/><rect x="883" y="597" width="44" height="1" fill="#a0a0a0"/><rect x="883" y="597" width="1" height="17" fill="#a0a0a0"/><rect x="883" y="613" width="44" height="1" fill="#ffffff"/><rect x="926" y="597" width="1" height="17" fill="#ffffff"/><text transform="translate(925.50,609.30) scale(0.87,1)" fill="#000" font-size="12" text-anchor="end">90</text><rect x="759" y="627" width="13" height="13" fill="#f0f0f0"/><rect x="759" y="627" width="13" height="1" fill="#a0a0a0"/><rect x="759" y="627" width="1" height="13" fill="#a0a0a0"/><rect x="759" y="639" width="13" height="1" fill="#ffffff"/><rect x="771" y="627" width="1" height="13" fill="#ffffff"/><rect x="760" y="628" width="11" height="1" fill="#696969"/><rect x="760" y="628" width="1" height="11" fill="#696969"/><rect x="760" y="638" width="11" height="1" fill="#e3e3e3"/><rect x="770" y="628" width="1" height="11" fill="#e3e3e3"/><text transform="translate(777.50,638.80) scale(0.87,1)" fill="#ffffff" font-size="12">DP</text><text transform="translate(776.50,637.80) scale(0.87,1)" fill="#a0a0a0" font-size="12">DP</text><rect x="806" y="627" width="13" height="13" fill="#f0f0f0"/><rect x="806" y="627" width="13" height="1" fill="#a0a0a0"/><rect x="806" y="627" width="1" height="13" fill="#a0a0a0"/><rect x="806" y="639" width="13" height="1" fill="#ffffff"/><rect x="818" y="627" width="1" height="13" fill="#ffffff"/><rect x="807" y="628" width="11" height="1" fill="#696969"/><rect x="807" y="628" width="1" height="11" fill="#696969"/><rect x="807" y="638" width="11" height="1" fill="#e3e3e3"/><rect x="817" y="628" width="1" height="11" fill="#e3e3e3"/><text transform="translate(825.50,638.80) scale(0.87,1)" fill="#ffffff" font-size="12">Autoloader</text><text transform="translate(824.50,637.80) scale(0.87,1)" fill="#a0a0a0" font-size="12">Autoloader</text><rect x="699" y="678" width="23" height="23" fill="#f8f8f8"/><rect x="699" y="678" width="23" height="1" fill="#a0a0a0"/><rect x="699" y="678" width="1" height="23" fill="#a0a0a0"/><rect x="699" y="700" width="23" height="1" fill="#ffffff"/><rect x="721" y="678" width="1" height="23" fill="#ffffff"/><rect x="700" y="679" width="21" height="1" fill="#696969"/><rect x="700" y="679" width="1" height="21" fill="#696969"/><rect x="700" y="699" width="21" height="1" fill="#e3e3e3"/><rect x="720" y="679" width="1" height="21" fill="#e3e3e3"/><polygon points="704,690 710,686.5 710,693.5" fill="#e00000" stroke="#600" stroke-width="0.5"/><polygon points="719,690 713,686.5 713,693.5" fill="#e00000" stroke="#600" stroke-width="0.5"/><rect x="699" y="706" width="23" height="17" fill="#f0f0f0"/><rect x="699" y="706" width="23" height="1" fill="#ffffff"/><rect x="699" y="706" width="1" height="17" fill="#ffffff"/><rect x="699" y="722" width="23" height="1" fill="#696969"/><rect x="721" y="706" width="1" height="17" fill="#696969"/><rect x="700" y="707" width="21" height="1" fill="#e3e3e3"/><rect x="700" y="707" width="1" height="15" fill="#e3e3e3"/><rect x="700" y="721" width="21" height="1" fill="#a0a0a0"/><rect x="720" y="707" width="1" height="15" fill="#a0a0a0"/><text transform="translate(711.00,717.80) scale(0.87,1)" fill="#000" font-size="12" text-anchor="middle">EA</text><text transform="translate(843.50,708.80) scale(0.87,1)" fill="#000" font-size="12">Special systems weight</text><rect x="963" y="698" width="60" height="17" fill="#f0f0f0"/><rect x="963" y="698" width="60" height="1" fill="#a0a0a0"/><rect x="963" y="698" width="1" height="17" fill="#a0a0a0"/><rect x="963" y="714" width="60" height="1" fill="#ffffff"/><rect x="1022" y="698" width="1" height="17" fill="#ffffff"/><text transform="translate(1021.50,710.30) scale(0.87,1)" fill="#000" font-size="12" text-anchor="end">0</text><text transform="translate(740.50,732.80) scale(0.87,1)" fill="#000" font-size="12">Picture name</text><rect x="811" y="722" width="161" height="21" fill="#ffffff"/><rect x="811" y="722" width="161" height="1" fill="#a0a0a0"/><rect x="811" y="722" width="1" height="21" fill="#a0a0a0"/><rect x="811" y="742" width="161" height="1" fill="#ffffff"/><rect x="971" y="722" width="1" height="21" fill="#ffffff"/><rect x="812" y="723" width="159" height="1" fill="#696969"/><rect x="812" y="723" width="1" height="19" fill="#696969"/><rect x="812" y="741" width="159" height="1" fill="#e3e3e3"/><rect x="970" y="723" width="1" height="19" fill="#e3e3e3"/><rect x="974" y="722" width="22" height="19" fill="#f0f0f0"/><rect x="974" y="722" width="22" height="1" fill="#ffffff"/><rect x="974" y="722" width="1" height="19" fill="#ffffff"/><rect x="974" y="740" width="22" height="1" fill="#696969"/><rect x="995" y="722" width="1" height="19" fill="#696969"/><rect x="975" y="723" width="20" height="1" fill="#e3e3e3"/><rect x="975" y="723" width="1" height="17" fill="#e3e3e3"/><rect x="975" y="739" width="20" height="1" fill="#a0a0a0"/><rect x="994" y="723" width="1" height="17" fill="#a0a0a0"/><text transform="translate(985.50,735.80) scale(0.87,1)" fill="#000" font-size="12" text-anchor="middle">...</text><rect x="998" y="722" width="23" height="19" fill="#f0f0f0"/><rect x="998" y="722" width="23" height="1" fill="#ffffff"/><rect x="998" y="722" width="1" height="19" fill="#ffffff"/><rect x="998" y="740" width="23" height="1" fill="#696969"/><rect x="1020" y="722" width="1" height="19" fill="#696969"/><rect x="999" y="723" width="21" height="1" fill="#e3e3e3"/><rect x="999" y="723" width="1" height="17" fill="#e3e3e3"/><rect x="999" y="739" width="21" height="1" fill="#a0a0a0"/><rect x="1019" y="723" width="1" height="17" fill="#a0a0a0"/><path d="M1005,727.5 l8,8 M1013,727.5 l-8,8" stroke="#000" stroke-width="0.9" shape-rendering="auto"/><rect x="1012" y="54" width="337" height="621" fill="#f0f0f0"/><rect x="1012" y="54" width="337" height="1" fill="#ffffff"/><rect x="1012" y="54" width="1" height="621" fill="#ffffff"/><rect x="1012" y="674" width="337" height="1" fill="#696969"/><rect x="1348" y="54" width="1" height="621" fill="#696969"/><rect x="1013" y="673" width="335" height="1" fill="#a0a0a0"/><rect x="1347" y="55" width="1" height="619" fill="#a0a0a0"/><rect x="1123" y="37" width="133" height="18" fill="#f0f0f0"/><rect x="1124" y="37" width="131" height="1" fill="#ffffff"/><rect x="1123" y="38" width="1" height="17" fill="#ffffff"/><rect x="1255" y="38" width="1" height="16" fill="#696969"/><rect x="1254" y="38" width="1" height="16" fill="#a0a0a0"/><text transform="translate(1127.50,49.80) scale(0.87,1)" fill="#000" font-size="12">Flight installations, missiles</text><rect x="1013" y="34" width="109" height="22" fill="#f0f0f0"/><rect x="1015" y="34" width="105" height="1" fill="#ffffff"/><rect x="1013" y="36" width="1" height="20" fill="#ffffff"/><rect x="1121" y="36" width="1" height="19" fill="#696969"/><rect x="1120" y="35" width="1" height="20" fill="#a0a0a0"/><rect x="1014" y="35" width="1" height="1" fill="#fff"/><text transform="translate(1020.50,48.30) scale(0.87,1)" fill="#000" font-size="12">Additional armament</text><rect x="1024" y="63" width="312" height="1" fill="#a0a0a0"/><rect x="1024" y="63" width="1" height="211" fill="#a0a0a0"/><rect x="1024" y="273" width="312" height="1" fill="#a0a0a0"/><rect x="1335" y="63" width="1" height="211" fill="#a0a0a0"/><rect x="1025" y="64" width="310" height="1" fill="#ffffff"/><rect x="1025" y="64" width="1" height="209" fill="#ffffff"/><rect x="1024" y="274" width="313" height="1" fill="#ffffff"/><rect x="1336" y="63" width="1" height="212" fill="#ffffff"/><rect x="1032" y="58.5" width="51" height="14.0" fill="#f0f0f0"/><text transform="translate(1033.50,69.30) scale(0.87,1)" fill="#000" font-size="12">Torpedoes</text><rect x="1032" y="86" width="297" height="113" fill="#ffffff"/><rect x="1032" y="86" width="297" height="1" fill="#a0a0a0"/><rect x="1032" y="86" width="1" height="113" fill="#a0a0a0"/><rect x="1032" y="198" width="297" height="1" fill="#ffffff"/><rect x="1328" y="86" width="1" height="113" fill="#ffffff"/><rect x="1033" y="87" width="295" height="1" fill="#696969"/><rect x="1033" y="87" width="1" height="111" fill="#696969"/><rect x="1033" y="197" width="295" height="1" fill="#e3e3e3"/><rect x="1327" y="87" width="1" height="111" fill="#e3e3e3"/><rect x="1034" y="88" width="150" height="16" fill="#f0f0f0"/><rect x="1034" y="88" width="150" height="1" fill="#ffffff"/><rect x="1034" y="88" width="1" height="16" fill="#ffffff"/><rect x="1034" y="103" width="150" height="1" fill="#696969"/><rect x="1183" y="88" width="1" height="16" fill="#696969"/><rect x="1035" y="89" width="148" height="1" fill="#e3e3e3"/><rect x="1035" y="89" width="1" height="14" fill="#e3e3e3"/><rect x="1035" y="102" width="148" height="1" fill="#a0a0a0"/><rect x="1182" y="89" width="1" height="14" fill="#a0a0a0"/><rect x="1184" y="88" width="60" height="16" fill="#f0f0f0"/><rect x="1184" y="88" width="60" height="1" fill="#ffffff"/><rect x="1184" y="88" width="1" height="16" fill="#ffffff"/><rect x="1184" y="103" width="60" height="1" fill="#696969"/><rect x="1243" y="88" width="1" height="16" fill="#696969"/><rect x="1185" y="89" width="58" height="1" fill="#e3e3e3"/><rect x="1185" y="89" width="1" height="14" fill="#e3e3e3"/><rect x="1185" y="102" width="58" height="1" fill="#a0a0a0"/><rect x="1242" y="89" width="1" height="14" fill="#a0a0a0"/><rect x="1244" y="88" width="81" height="16" fill="#f0f0f0"/><rect x="1244" y="88" width="81" height="1" fill="#ffffff"/><rect x="1244" y="88" width="1" height="16" fill="#ffffff"/><rect x="1244" y="103" width="81" height="1" fill="#696969"/><rect x="1324" y="88" width="1" height="16" fill="#696969"/><rect x="1245" y="89" width="79" height="1" fill="#e3e3e3"/><rect x="1245" y="89" width="1" height="14" fill="#e3e3e3"/><rect x="1245" y="102" width="79" height="1" fill="#a0a0a0"/><rect x="1323" y="89" width="1" height="14" fill="#a0a0a0"/><rect x="1325" y="88" width="2" height="16" fill="#f0f0f0"/><rect x="1325" y="88" width="2" height="1" fill="#ffffff"/><rect x="1325" y="88" width="1" height="16" fill="#ffffff"/><rect x="1325" y="103" width="2" height="1" fill="#696969"/><rect x="1325" y="102" width="2" height="1" fill="#a0a0a0"/><text transform="translate(1040.50,101.30) scale(0.87,1)" fill="#000" font-size="12">Position</text><text transform="translate(1190.50,101.30) scale(0.87,1)" fill="#000" font-size="12">Tubes/...</text><text transform="translate(1250.50,101.30) scale(0.87,1)" fill="#000" font-size="12">Weight/mount</text><text transform="translate(1038.00,118.30) scale(0.87,1)" fill="#000" font-size="12">8 - Port broadside (sub)</text><text transform="translate(1191.00,118.30) scale(0.87,1)" fill="#000" font-size="12">1</text><text transform="translate(1251.00,118.30) scale(0.87,1)" fill="#000" font-size="12">23</text><text transform="translate(1038.00,132.30) scale(0.87,1)" fill="#000" font-size="12">9 - Starboard broadside (sub)</text><text transform="translate(1191.00,132.30) scale(0.87,1)" fill="#000" font-size="12">1</text><text transform="translate(1251.00,132.30) scale(0.87,1)" fill="#000" font-size="12">23</text><text transform="translate(1038.00,146.30) scale(0.87,1)" fill="#000" font-size="12">6 - Port broadside (sub)</text><text transform="translate(1191.00,146.30) scale(0.87,1)" fill="#000" font-size="12">1</text><text transform="translate(1251.00,146.30) scale(0.87,1)" fill="#000" font-size="12">23</text><text transform="translate(1038.00,160.30) scale(0.87,1)" fill="#000" font-size="12">7 - Starboard broadside (sub)</text><text transform="translate(1191.00,160.30) scale(0.87,1)" fill="#000" font-size="12">1</text><text transform="translate(1251.00,160.30) scale(0.87,1)" fill="#000" font-size="12">23</text><rect x="1032" y="210" width="74" height="18" fill="#f0f0f0"/><rect x="1032" y="210" width="74" height="1" fill="#ffffff"/><rect x="1032" y="210" width="1" height="18" fill="#ffffff"/><rect x="1032" y="227" width="74" height="1" fill="#696969"/><rect x="1105" y="210" width="1" height="18" fill="#696969"/><rect x="1033" y="211" width="72" height="1" fill="#e3e3e3"/><rect x="1033" y="211" width="1" height="16" fill="#e3e3e3"/><rect x="1033" y="226" width="72" height="1" fill="#a0a0a0"/><rect x="1104" y="211" width="1" height="16" fill="#a0a0a0"/><text transform="translate(1069.50,222.80) scale(0.87,1)" fill="#000" font-size="12" text-anchor="middle">Add mount</text><rect x="1144" y="210" width="74" height="18" fill="#f0f0f0"/><rect x="1144" y="210" width="74" height="1" fill="#ffffff"/><rect x="1144" y="210" width="1" height="18" fill="#ffffff"/><rect x="1144" y="227" width="74" height="1" fill="#696969"/><rect x="1217" y="210" width="1" height="18" fill="#696969"/><rect x="1145" y="211" width="72" height="1" fill="#e3e3e3"/><rect x="1145" y="211" width="1" height="16" fill="#e3e3e3"/><rect x="1145" y="226" width="72" height="1" fill="#a0a0a0"/><rect x="1216" y="211" width="1" height="16" fill="#a0a0a0"/><text transform="translate(1181.50,222.80) scale(0.87,1)" fill="#000" font-size="12" text-anchor="middle">Delete mount</text><rect x="1248" y="210" width="82" height="18" fill="#f0f0f0"/><rect x="1248" y="210" width="82" height="1" fill="#ffffff"/><rect x="1248" y="210" width="1" height="18" fill="#ffffff"/><rect x="1248" y="227" width="82" height="1" fill="#696969"/><rect x="1329" y="210" width="1" height="18" fill="#696969"/><rect x="1249" y="211" width="80" height="1" fill="#e3e3e3"/><rect x="1249" y="211" width="1" height="16" fill="#e3e3e3"/><rect x="1249" y="226" width="80" height="1" fill="#a0a0a0"/><rect x="1328" y="211" width="1" height="16" fill="#a0a0a0"/><text transform="translate(1289.50,222.80) scale(0.87,1)" fill="#000" font-size="12" text-anchor="middle">Clear mounts</text><rect x="1034" y="248" width="13" height="13" fill="#f0f0f0"/><rect x="1034" y="248" width="13" height="1" fill="#a0a0a0"/><rect x="1034" y="248" width="1" height="13" fill="#a0a0a0"/><rect x="1034" y="260" width="13" height="1" fill="#ffffff"/><rect x="1046" y="248" width="1" height="13" fill="#ffffff"/><rect x="1035" y="249" width="11" height="1" fill="#696969"/><rect x="1035" y="249" width="1" height="11" fill="#696969"/><rect x="1035" y="259" width="11" height="1" fill="#e3e3e3"/><rect x="1045" y="249" width="1" height="11" fill="#e3e3e3"/><text transform="translate(1054.50,260.80) scale(0.87,1)" fill="#ffffff" font-size="12">Torpedo reloads (above water tubes)</text><text transform="translate(1053.50,259.80) scale(0.87,1)" fill="#a0a0a0" font-size="12">Torpedo reloads (above water tubes)</text><rect x="1024" y="292" width="312" height="1" fill="#a0a0a0"/><rect x="1024" y="292" width="1" height="134" fill="#a0a0a0"/><rect x="1024" y="425" width="312" height="1" fill="#a0a0a0"/><rect x="1335" y="292" width="1" height="134" fill="#a0a0a0"/><rect x="1025" y="293" width="310" height="1" fill="#ffffff"/><rect x="1025" y="293" width="1" height="132" fill="#ffffff"/><rect x="1024" y="426" width="313" height="1" fill="#ffffff"/><rect x="1336" y="292" width="1" height="135" fill="#ffffff"/><rect x="1031" y="287" width="56" height="14" fill="#f0f0f0"/><text transform="translate(1032.50,297.80) scale(0.87,1)" fill="#000" font-size="12">Anti Aircraft</text><text transform="translate(1034.50,320.80) scale(0.87,1)" fill="#000" font-size="12">AA positions used: 0 of 83</text><text transform="translate(1221.50,331.80) scale(0.87,1)" fill="#000" font-size="12">Weight</text><text transform="translate(1276.50,331.80) scale(0.87,1)" fill="#000" font-size="12">Cost</text><text transform="translate(1032.50,348.80) scale(0.87,1)" fill="#000" font-size="12">Light Anti Aircraft guns</text><rect x="1160" y="335" width="49" height="22" fill="#ffffff"/><rect x="1160" y="335" width="49" height="1" fill="#a0a0a0"/><rect x="1160" y="335" width="1" height="22" fill="#a0a0a0"/><rect x="1160" y="356" width="49" height="1" fill="#ffffff"/><rect x="1208" y="335" width="1" height="22" fill="#ffffff"/><rect x="1161" y="336" width="47" height="1" fill="#696969"/><rect x="1161" y="336" width="1" height="20" fill="#696969"/><rect x="1161" y="355" width="47" height="1" fill="#e3e3e3"/><rect x="1207" y="336" width="1" height="20" fill="#e3e3e3"/><text transform="translate(1164.50,349.30) scale(0.87,1)" fill="#6d6d6d" font-size="12">0</text><rect x="1192" y="338" width="15" height="8" fill="#f0f0f0"/><rect x="1192" y="338" width="15" height="1" fill="#e3e3e3"/><rect x="1192" y="338" width="1" height="8" fill="#e3e3e3"/><rect x="1192" y="345" width="15" height="1" fill="#696969"/><rect x="1206" y="338" width="1" height="8" fill="#696969"/><rect x="1193" y="339" width="13" height="1" fill="#ffffff"/><rect x="1193" y="344" width="13" height="1" fill="#a0a0a0"/><rect x="1205" y="339" width="1" height="6" fill="#a0a0a0"/><rect x="1199" y="341" width="1" height="1" fill="#000"/><rect x="1198" y="342" width="3" height="1" fill="#000"/><rect x="1197" y="343" width="5" height="1" fill="#000"/><rect x="1196" y="344" width="7" height="1" fill="#000"/><rect x="1192" y="346" width="15" height="8" fill="#f0f0f0"/><rect x="1192" y="346" width="15" height="1" fill="#e3e3e3"/><rect x="1192" y="346" width="1" height="8" fill="#e3e3e3"/><rect x="1192" y="353" width="15" height="1" fill="#696969"/><rect x="1206" y="346" width="1" height="8" fill="#696969"/><rect x="1193" y="347" width="13" height="1" fill="#ffffff"/><rect x="1193" y="352" width="13" height="1" fill="#a0a0a0"/><rect x="1205" y="347" width="1" height="6" fill="#a0a0a0"/><rect x="1196" y="348" width="7" height="1" fill="#000"/><rect x="1197" y="349" width="5" height="1" fill="#000"/><rect x="1198" y="350" width="3" height="1" fill="#000"/><rect x="1199" y="351" width="1" height="1" fill="#000"/><rect x="1218" y="337" width="48" height="17" fill="#f0f0f0"/><rect x="1218" y="337" width="48" height="1" fill="#a0a0a0"/><rect x="1218" y="337" width="1" height="17" fill="#a0a0a0"/><rect x="1218" y="353" width="48" height="1" fill="#ffffff"/><rect x="1265" y="337" width="1" height="17" fill="#ffffff"/><text transform="translate(1264.50,349.30) scale(0.87,1)" fill="#000" font-size="12" text-anchor="end">0</text><rect x="1272" y="337" width="49" height="17" fill="#f0f0f0"/><rect x="1272" y="337" width="49" height="1" fill="#a0a0a0"/><rect x="1272" y="337" width="1" height="17" fill="#a0a0a0"/><rect x="1272" y="353" width="49" height="1" fill="#ffffff"/><rect x="1320" y="337" width="1" height="17" fill="#ffffff"/><text transform="translate(1319.50,349.30) scale(0.87,1)" fill="#000" font-size="12" text-anchor="end">0</text><text transform="translate(1032.50,379.80) scale(0.87,1)" fill="#000" font-size="12">Medium Anti Aircraft guns</text><rect x="1160" y="365" width="49" height="22" fill="#ffffff"/><rect x="1160" y="365" width="49" height="1" fill="#a0a0a0"/><rect x="1160" y="365" width="1" height="22" fill="#a0a0a0"/><rect x="1160" y="386" width="49" height="1" fill="#ffffff"/><rect x="1208" y="365" width="1" height="22" fill="#ffffff"/><rect x="1161" y="366" width="47" height="1" fill="#696969"/><rect x="1161" y="366" width="1" height="20" fill="#696969"/><rect x="1161" y="385" width="47" height="1" fill="#e3e3e3"/><rect x="1207" y="366" width="1" height="20" fill="#e3e3e3"/><text transform="translate(1164.50,379.30) scale(0.87,1)" fill="#6d6d6d" font-size="12">0</text><rect x="1192" y="368" width="15" height="8" fill="#f0f0f0"/><rect x="1192" y="368" width="15" height="1" fill="#e3e3e3"/><rect x="1192" y="368" width="1" height="8" fill="#e3e3e3"/><rect x="1192" y="375" width="15" height="1" fill="#696969"/><rect x="1206" y="368" width="1" height="8" fill="#696969"/><rect x="1193" y="369" width="13" height="1" fill="#ffffff"/><rect x="1193" y="374" width="13" height="1" fill="#a0a0a0"/><rect x="1205" y="369" width="1" height="6" fill="#a0a0a0"/><rect x="1199" y="371" width="1" height="1" fill="#000"/><rect x="1198" y="372" width="3" height="1" fill="#000"/><rect x="1197" y="373" width="5" height="1" fill="#000"/><rect x="1196" y="374" width="7" height="1" fill="#000"/><rect x="1192" y="376" width="15" height="8" fill="#f0f0f0"/><rect x="1192" y="376" width="15" height="1" fill="#e3e3e3"/><rect x="1192" y="376" width="1" height="8" fill="#e3e3e3"/><rect x="1192" y="383" width="15" height="1" fill="#696969"/><rect x="1206" y="376" width="1" height="8" fill="#696969"/><rect x="1193" y="377" width="13" height="1" fill="#ffffff"/><rect x="1193" y="382" width="13" height="1" fill="#a0a0a0"/><rect x="1205" y="377" width="1" height="6" fill="#a0a0a0"/><rect x="1196" y="378" width="7" height="1" fill="#000"/><rect x="1197" y="379" width="5" height="1" fill="#000"/><rect x="1198" y="380" width="3" height="1" fill="#000"/><rect x="1199" y="381" width="1" height="1" fill="#000"/><rect x="1218" y="367" width="48" height="17" fill="#f0f0f0"/><rect x="1218" y="367" width="48" height="1" fill="#a0a0a0"/><rect x="1218" y="367" width="1" height="17" fill="#a0a0a0"/><rect x="1218" y="383" width="48" height="1" fill="#ffffff"/><rect x="1265" y="367" width="1" height="17" fill="#ffffff"/><text transform="translate(1264.50,379.30) scale(0.87,1)" fill="#000" font-size="12" text-anchor="end">0</text><rect x="1272" y="367" width="49" height="17" fill="#f0f0f0"/><rect x="1272" y="367" width="49" height="1" fill="#a0a0a0"/><rect x="1272" y="367" width="1" height="17" fill="#a0a0a0"/><rect x="1272" y="383" width="49" height="1" fill="#ffffff"/><rect x="1320" y="367" width="1" height="17" fill="#ffffff"/><text transform="translate(1319.50,379.30) scale(0.87,1)" fill="#000" font-size="12" text-anchor="end">0</text><text transform="translate(1032.50,406.80) scale(0.87,1)" fill="#000" font-size="12">AA directors</text><rect x="1160" y="395" width="49" height="22" fill="#ffffff"/><rect x="1160" y="395" width="49" height="1" fill="#a0a0a0"/><rect x="1160" y="395" width="1" height="22" fill="#a0a0a0"/><rect x="1160" y="416" width="49" height="1" fill="#ffffff"/><rect x="1208" y="395" width="1" height="22" fill="#ffffff"/><rect x="1161" y="396" width="47" height="1" fill="#696969"/><rect x="1161" y="396" width="1" height="20" fill="#696969"/><rect x="1161" y="415" width="47" height="1" fill="#e3e3e3"/><rect x="1207" y="396" width="1" height="20" fill="#e3e3e3"/><text transform="translate(1164.50,409.30) scale(0.87,1)" fill="#6d6d6d" font-size="12">0</text><rect x="1192" y="398" width="15" height="8" fill="#f0f0f0"/><rect x="1192" y="398" width="15" height="1" fill="#e3e3e3"/><rect x="1192" y="398" width="1" height="8" fill="#e3e3e3"/><rect x="1192" y="405" width="15" height="1" fill="#696969"/><rect x="1206" y="398" width="1" height="8" fill="#696969"/><rect x="1193" y="399" width="13" height="1" fill="#ffffff"/><rect x="1193" y="404" width="13" height="1" fill="#a0a0a0"/><rect x="1205" y="399" width="1" height="6" fill="#a0a0a0"/><rect x="1199" y="401" width="1" height="1" fill="#000"/><rect x="1198" y="402" width="3" height="1" fill="#000"/><rect x="1197" y="403" width="5" height="1" fill="#000"/><rect x="1196" y="404" width="7" height="1" fill="#000"/><rect x="1192" y="406" width="15" height="8" fill="#f0f0f0"/><rect x="1192" y="406" width="15" height="1" fill="#e3e3e3"/><rect x="1192" y="406" width="1" height="8" fill="#e3e3e3"/><rect x="1192" y="413" width="15" height="1" fill="#696969"/><rect x="1206" y="406" width="1" height="8" fill="#696969"/><rect x="1193" y="407" width="13" height="1" fill="#ffffff"/><rect x="1193" y="412" width="13" height="1" fill="#a0a0a0"/><rect x="1205" y="407" width="1" height="6" fill="#a0a0a0"/><rect x="1196" y="408" width="7" height="1" fill="#000"/><rect x="1197" y="409" width="5" height="1" fill="#000"/><rect x="1198" y="410" width="3" height="1" fill="#000"/><rect x="1199" y="411" width="1" height="1" fill="#000"/><rect x="1218" y="396" width="48" height="17" fill="#f0f0f0"/><rect x="1218" y="396" width="48" height="1" fill="#a0a0a0"/><rect x="1218" y="396" width="1" height="17" fill="#a0a0a0"/><rect x="1218" y="412" width="48" height="1" fill="#ffffff"/><rect x="1265" y="396" width="1" height="17" fill="#ffffff"/><text transform="translate(1264.50,408.30) scale(0.87,1)" fill="#000" font-size="12" text-anchor="end">0</text><rect x="1272" y="396" width="49" height="17" fill="#f0f0f0"/><rect x="1272" y="396" width="49" height="1" fill="#a0a0a0"/><rect x="1272" y="396" width="1" height="17" fill="#a0a0a0"/><rect x="1272" y="412" width="49" height="1" fill="#ffffff"/><rect x="1320" y="396" width="1" height="17" fill="#ffffff"/><text transform="translate(1319.50,408.30) scale(0.87,1)" fill="#000" font-size="12" text-anchor="end">0</text><rect x="1024" y="439" width="312" height="1" fill="#a0a0a0"/><rect x="1024" y="439" width="1" height="80" fill="#a0a0a0"/><rect x="1024" y="518" width="312" height="1" fill="#a0a0a0"/><rect x="1335" y="439" width="1" height="80" fill="#a0a0a0"/><rect x="1025" y="440" width="310" height="1" fill="#ffffff"/><rect x="1025" y="440" width="1" height="78" fill="#ffffff"/><rect x="1024" y="519" width="313" height="1" fill="#ffffff"/><rect x="1336" y="439" width="1" height="81" fill="#ffffff"/><rect x="1031" y="434" width="63" height="14" fill="#f0f0f0"/><text transform="translate(1032.50,444.80) scale(0.87,1)" fill="#000" font-size="12">Mine warfare</text><text transform="translate(1032.50,467.80) scale(0.87,1)" fill="#000" font-size="12">Mines</text><text transform="translate(1064.50,467.80) scale(0.87,1)" fill="#6d6d6d" font-size="12">(max 0)</text><rect x="1120" y="453" width="48" height="22" fill="#ffffff"/><rect x="1120" y="453" width="48" height="1" fill="#a0a0a0"/><rect x="1120" y="453" width="1" height="22" fill="#a0a0a0"/><rect x="1120" y="474" width="48" height="1" fill="#ffffff"/><rect x="1167" y="453" width="1" height="22" fill="#ffffff"/><rect x="1121" y="454" width="46" height="1" fill="#696969"/><rect x="1121" y="454" width="1" height="20" fill="#696969"/><rect x="1121" y="473" width="46" height="1" fill="#e3e3e3"/><rect x="1166" y="454" width="1" height="20" fill="#e3e3e3"/><text transform="translate(1124.50,467.30) scale(0.87,1)" fill="#6d6d6d" font-size="12">0</text><rect x="1151" y="456" width="15" height="8" fill="#f0f0f0"/><rect x="1151" y="456" width="15" height="1" fill="#e3e3e3"/><rect x="1151" y="456" width="1" height="8" fill="#e3e3e3"/><rect x="1151" y="463" width="15" height="1" fill="#696969"/><rect x="1165" y="456" width="1" height="8" fill="#696969"/><rect x="1152" y="457" width="13" height="1" fill="#ffffff"/><rect x="1152" y="462" width="13" height="1" fill="#a0a0a0"/><rect x="1164" y="457" width="1" height="6" fill="#a0a0a0"/><rect x="1158" y="459" width="1" height="1" fill="#000"/><rect x="1157" y="460" width="3" height="1" fill="#000"/><rect x="1156" y="461" width="5" height="1" fill="#000"/><rect x="1155" y="462" width="7" height="1" fill="#000"/><rect x="1151" y="464" width="15" height="8" fill="#f0f0f0"/><rect x="1151" y="464" width="15" height="1" fill="#e3e3e3"/><rect x="1151" y="464" width="1" height="8" fill="#e3e3e3"/><rect x="1151" y="471" width="15" height="1" fill="#696969"/><rect x="1165" y="464" width="1" height="8" fill="#696969"/><rect x="1152" y="465" width="13" height="1" fill="#ffffff"/><rect x="1152" y="470" width="13" height="1" fill="#a0a0a0"/><rect x="1164" y="465" width="1" height="6" fill="#a0a0a0"/><rect x="1155" y="466" width="7" height="1" fill="#000"/><rect x="1156" y="467" width="5" height="1" fill="#000"/><rect x="1157" y="468" width="3" height="1" fill="#000"/><rect x="1158" y="469" width="1" height="1" fill="#000"/><text transform="translate(1035.50,499.80) scale(0.87,1)" fill="#000" font-size="12">Minesweeping gear</text><rect x="1148" y="491" width="13" height="13" fill="#ffffff"/><rect x="1148" y="491" width="13" height="1" fill="#a0a0a0"/><rect x="1148" y="491" width="1" height="13" fill="#a0a0a0"/><rect x="1148" y="503" width="13" height="1" fill="#ffffff"/><rect x="1160" y="491" width="1" height="13" fill="#ffffff"/><rect x="1149" y="492" width="11" height="1" fill="#696969"/><rect x="1149" y="492" width="1" height="11" fill="#696969"/><rect x="1149" y="502" width="11" height="1" fill="#e3e3e3"/><rect x="1159" y="492" width="1" height="11" fill="#e3e3e3"/><rect x="1186" y="489" width="60" height="17" fill="#f0f0f0"/><rect x="1186" y="489" width="60" height="1" fill="#a0a0a0"/><rect x="1186" y="489" width="1" height="17" fill="#a0a0a0"/><rect x="1186" y="505" width="60" height="1" fill="#ffffff"/><rect x="1245" y="489" width="1" height="17" fill="#ffffff"/><text transform="translate(1244.50,501.30) scale(0.87,1)" fill="#000" font-size="12" text-anchor="end">0</text><rect x="1272" y="487" width="49" height="17" fill="#f0f0f0"/><rect x="1272" y="487" width="49" height="1" fill="#a0a0a0"/><rect x="1272" y="487" width="1" height="17" fill="#a0a0a0"/><rect x="1272" y="503" width="49" height="1" fill="#ffffff"/><rect x="1320" y="487" width="1" height="17" fill="#ffffff"/><text transform="translate(1319.50,499.30) scale(0.87,1)" fill="#000" font-size="12" text-anchor="end">0</text><rect x="1024" y="535" width="312" height="1" fill="#a0a0a0"/><rect x="1024" y="535" width="1" height="123" fill="#a0a0a0"/><rect x="1024" y="657" width="312" height="1" fill="#a0a0a0"/><rect x="1335" y="535" width="1" height="123" fill="#a0a0a0"/><rect x="1025" y="536" width="310" height="1" fill="#ffffff"/><rect x="1025" y="536" width="1" height="121" fill="#ffffff"/><rect x="1024" y="658" width="313" height="1" fill="#ffffff"/><rect x="1336" y="535" width="1" height="124" fill="#ffffff"/><rect x="1031" y="531.5" width="26" height="14.0" fill="#f0f0f0"/><text transform="translate(1032.50,542.30) scale(0.87,1)" fill="#000" font-size="12">ASW</text><text transform="translate(1197.50,555.80) scale(0.87,1)" fill="#000" font-size="12">Weight</text><text transform="translate(1276.50,552.80) scale(0.87,1)" fill="#000" font-size="12">Cost</text><text transform="translate(1032.50,568.80) scale(0.87,1)" fill="#000" font-size="12">K-guns</text><rect x="1120" y="557" width="48" height="22" fill="#ffffff"/><rect x="1120" y="557" width="48" height="1" fill="#a0a0a0"/><rect x="1120" y="557" width="1" height="22" fill="#a0a0a0"/><rect x="1120" y="578" width="48" height="1" fill="#ffffff"/><rect x="1167" y="557" width="1" height="22" fill="#ffffff"/><rect x="1121" y="558" width="46" height="1" fill="#696969"/><rect x="1121" y="558" width="1" height="20" fill="#696969"/><rect x="1121" y="577" width="46" height="1" fill="#e3e3e3"/><rect x="1166" y="558" width="1" height="20" fill="#e3e3e3"/><text transform="translate(1124.50,571.30) scale(0.87,1)" fill="#6d6d6d" font-size="12">0</text><rect x="1151" y="560" width="15" height="8" fill="#f0f0f0"/><rect x="1151" y="560" width="15" height="1" fill="#e3e3e3"/><rect x="1151" y="560" width="1" height="8" fill="#e3e3e3"/><rect x="1151" y="567" width="15" height="1" fill="#696969"/><rect x="1165" y="560" width="1" height="8" fill="#696969"/><rect x="1152" y="561" width="13" height="1" fill="#ffffff"/><rect x="1152" y="566" width="13" height="1" fill="#a0a0a0"/><rect x="1164" y="561" width="1" height="6" fill="#a0a0a0"/><rect x="1158" y="563" width="1" height="1" fill="#000"/><rect x="1157" y="564" width="3" height="1" fill="#000"/><rect x="1156" y="565" width="5" height="1" fill="#000"/><rect x="1155" y="566" width="7" height="1" fill="#000"/><rect x="1151" y="568" width="15" height="8" fill="#f0f0f0"/><rect x="1151" y="568" width="15" height="1" fill="#e3e3e3"/><rect x="1151" y="568" width="1" height="8" fill="#e3e3e3"/><rect x="1151" y="575" width="15" height="1" fill="#696969"/><rect x="1165" y="568" width="1" height="8" fill="#696969"/><rect x="1152" y="569" width="13" height="1" fill="#ffffff"/><rect x="1152" y="574" width="13" height="1" fill="#a0a0a0"/><rect x="1164" y="569" width="1" height="6" fill="#a0a0a0"/><rect x="1155" y="570" width="7" height="1" fill="#000"/><rect x="1156" y="571" width="5" height="1" fill="#000"/><rect x="1157" y="572" width="3" height="1" fill="#000"/><rect x="1158" y="573" width="1" height="1" fill="#000"/><rect x="1186" y="561" width="60" height="17" fill="#f0f0f0"/><rect x="1186" y="561" width="60" height="1" fill="#a0a0a0"/><rect x="1186" y="561" width="1" height="17" fill="#a0a0a0"/><rect x="1186" y="577" width="60" height="1" fill="#ffffff"/><rect x="1245" y="561" width="1" height="17" fill="#ffffff"/><text transform="translate(1244.50,573.30) scale(0.87,1)" fill="#000" font-size="12" text-anchor="end">0</text><rect x="1272" y="559" width="49" height="17" fill="#f0f0f0"/><rect x="1272" y="559" width="49" height="1" fill="#a0a0a0"/><rect x="1272" y="559" width="1" height="17" fill="#a0a0a0"/><rect x="1272" y="575" width="49" height="1" fill="#ffffff"/><rect x="1320" y="559" width="1" height="17" fill="#ffffff"/><text transform="translate(1319.50,571.30) scale(0.87,1)" fill="#000" font-size="12" text-anchor="end">0</text><text transform="translate(1036.50,603.80) scale(0.87,1)" fill="#ffffff" font-size="12">Forward ASW mortar</text><text transform="translate(1035.50,602.80) scale(0.87,1)" fill="#a0a0a0" font-size="12">Forward ASW mortar</text><rect x="1148" y="592" width="13" height="13" fill="#f0f0f0"/><rect x="1148" y="592" width="13" height="1" fill="#a0a0a0"/><rect x="1148" y="592" width="1" height="13" fill="#a0a0a0"/><rect x="1148" y="604" width="13" height="1" fill="#ffffff"/><rect x="1160" y="592" width="1" height="13" fill="#ffffff"/><rect x="1149" y="593" width="11" height="1" fill="#696969"/><rect x="1149" y="593" width="1" height="11" fill="#696969"/><rect x="1149" y="603" width="11" height="1" fill="#e3e3e3"/><rect x="1159" y="593" width="1" height="11" fill="#e3e3e3"/><rect x="1186" y="593" width="60" height="17" fill="#f0f0f0"/><rect x="1186" y="593" width="60" height="1" fill="#a0a0a0"/><rect x="1186" y="593" width="1" height="17" fill="#a0a0a0"/><rect x="1186" y="609" width="60" height="1" fill="#ffffff"/><rect x="1245" y="593" width="1" height="17" fill="#ffffff"/><text transform="translate(1244.50,605.30) scale(0.87,1)" fill="#000" font-size="12" text-anchor="end">0</text><rect x="1272" y="591" width="49" height="17" fill="#f0f0f0"/><rect x="1272" y="591" width="49" height="1" fill="#a0a0a0"/><rect x="1272" y="591" width="1" height="17" fill="#a0a0a0"/><rect x="1272" y="607" width="49" height="1" fill="#ffffff"/><rect x="1320" y="591" width="1" height="17" fill="#ffffff"/><text transform="translate(1319.50,603.30) scale(0.87,1)" fill="#000" font-size="12" text-anchor="end">0</text><text transform="translate(1036.50,635.80) scale(0.87,1)" fill="#ffffff" font-size="12">Increased DC storage</text><text transform="translate(1035.50,634.80) scale(0.87,1)" fill="#a0a0a0" font-size="12">Increased DC storage</text><rect x="1148" y="624" width="13" height="13" fill="#f0f0f0"/><rect x="1148" y="624" width="13" height="1" fill="#a0a0a0"/><rect x="1148" y="624" width="1" height="13" fill="#a0a0a0"/><rect x="1148" y="636" width="13" height="1" fill="#ffffff"/><rect x="1160" y="624" width="1" height="13" fill="#ffffff"/><rect x="1149" y="625" width="11" height="1" fill="#696969"/><rect x="1149" y="625" width="1" height="11" fill="#696969"/><rect x="1149" y="635" width="11" height="1" fill="#e3e3e3"/><rect x="1159" y="625" width="1" height="11" fill="#e3e3e3"/><rect x="1186" y="625" width="60" height="17" fill="#f0f0f0"/><rect x="1186" y="625" width="60" height="1" fill="#a0a0a0"/><rect x="1186" y="625" width="1" height="17" fill="#a0a0a0"/><rect x="1186" y="641" width="60" height="1" fill="#ffffff"/><rect x="1245" y="625" width="1" height="17" fill="#ffffff"/><text transform="translate(1244.50,637.30) scale(0.87,1)" fill="#000" font-size="12" text-anchor="end">0</text><rect x="1272" y="623" width="49" height="17" fill="#f0f0f0"/><rect x="1272" y="623" width="49" height="1" fill="#a0a0a0"/><rect x="1272" y="623" width="1" height="17" fill="#a0a0a0"/><rect x="1272" y="639" width="49" height="1" fill="#ffffff"/><rect x="1320" y="623" width="1" height="17" fill="#ffffff"/><text transform="translate(1319.50,635.30) scale(0.87,1)" fill="#000" font-size="12" text-anchor="end">0</text></svg></body></html>
